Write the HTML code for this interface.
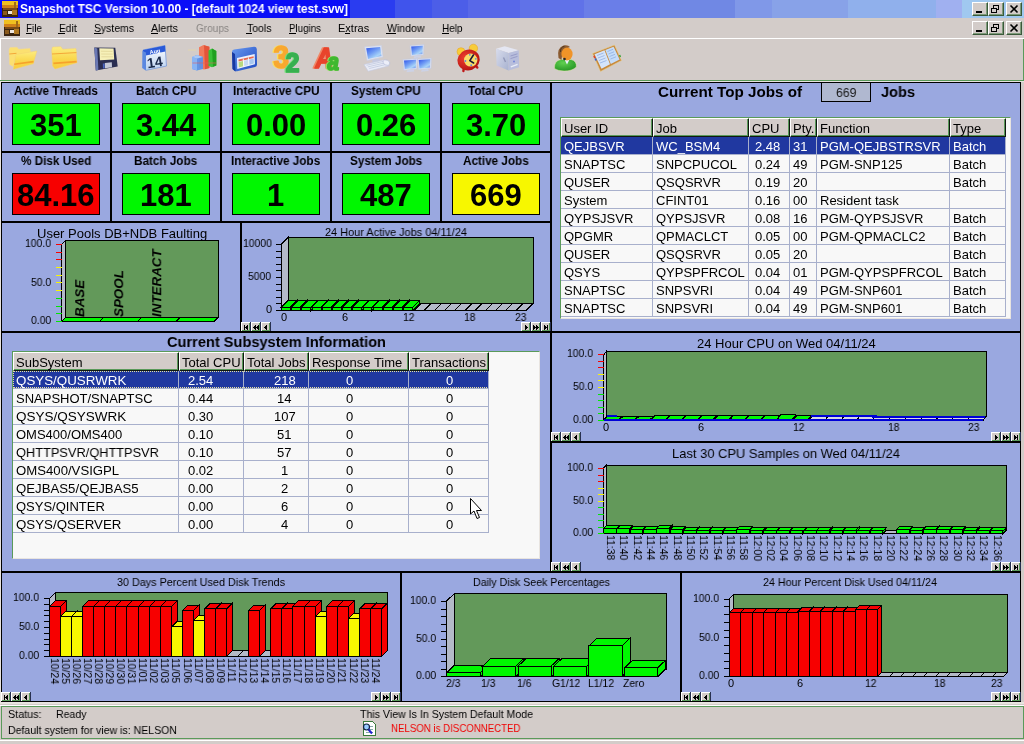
<!DOCTYPE html>
<html><head><meta charset="utf-8"><title>Snapshot TSC</title>
<style>
html,body{margin:0;padding:0;}
body{width:1024px;height:744px;overflow:hidden;background:#d3ccc9;font-family:"Liberation Sans",sans-serif;position:relative;}
.t{position:absolute;white-space:pre;transform-origin:0 0;will-change:transform;}
.b{position:absolute;box-sizing:border-box;}
svg{position:absolute;left:0;top:0;}
</style></head><body>
<div class="b" style="left:0px;top:0px;width:1024px;height:18px;background:linear-gradient(90deg,#0a0ef8 0px,#0a0ef8 350px,#2a3cf0 350px,#2a3cf0 395px,#4054ec 395px,#4054ec 432px,#4c5ee8 432px,#4c5ee8 468px,#5868e8 468px,#5868e8 520px,#6072e8 520px,#6072e8 584px,#6a7ee8 584px,#6a7ee8 660px,#7088e4 660px,#7088e4 735px,#8098e8 735px,#8098e8 772px,#88a2e8 772px,#88a2e8 848px,#90b0ec 848px,#90b0ec 936px,#a0b0f0 936px,#a0b0f0 962px,#a0c8f0 962px,#a0c8f0 1024px);"></div>
<svg width="1024" height="744"><g shape-rendering="crispEdges"><rect x="2" y="1" width="16" height="16" fill="#3a2410"/><rect x="2" y="1" width="16" height="4" fill="#f0c020"/><rect x="2" y="5" width="16" height="3" fill="#d08018"/><rect x="3" y="8" width="14" height="2" fill="#7a4a18"/><rect x="8" y="11" width="4" height="3" fill="#f0e8e0"/><rect x="12" y="10" width="5" height="5" fill="#b07820"/><rect x="3" y="11" width="4" height="4" fill="#8a5a1c"/><rect x="14" y="2" width="2" height="6" fill="#a06a18"/></g></svg>
<div class="t" style="left:20.00px;top:2.00px;font-size:12px;line-height:14px;color:#fff;font-weight:bold;transform:scaleX(0.9936);">Snapshot TSC Version 10.00 - [default 1024 view test.svw]</div>
<div class="b" style="left:0px;top:18px;width:1024px;height:20px;background:#d3ccc9;"></div>
<div class="b" style="left:972px;top:2px;width:16px;height:14px;background:#d3ccc9;border-top:1px solid #fff;border-left:1px solid #fff;border-right:1px solid #3a5a3a;border-bottom:1px solid #3a5a3a;box-shadow:inset -1px -1px 0 #7e9a7a;"></div>
<div class="b" style="left:976px;top:11px;width:6px;height:2px;background:#000"></div>
<div class="b" style="left:972px;top:21px;width:16px;height:14px;background:#d3ccc9;border-top:1px solid #fff;border-left:1px solid #fff;border-right:1px solid #3a5a3a;border-bottom:1px solid #3a5a3a;box-shadow:inset -1px -1px 0 #7e9a7a;"></div>
<div class="b" style="left:976px;top:30px;width:6px;height:2px;background:#000"></div>
<div class="b" style="left:988px;top:2px;width:16px;height:14px;background:#d3ccc9;border-top:1px solid #fff;border-left:1px solid #fff;border-right:1px solid #3a5a3a;border-bottom:1px solid #3a5a3a;box-shadow:inset -1px -1px 0 #7e9a7a;"></div>
<svg width="1024" height="744" style="pointer-events:none"><g fill="none" stroke="#000" shape-rendering="crispEdges"><rect x="993.5" y="5.5" width="5" height="4"/><line x1="993" y1="5" x2="999" y2="5"/><rect x="991.5" y="8.5" width="5" height="4" fill="#d3ccc9"/><line x1="991" y1="8" x2="997" y2="8"/></g></svg>
<div class="b" style="left:988px;top:21px;width:16px;height:14px;background:#d3ccc9;border-top:1px solid #fff;border-left:1px solid #fff;border-right:1px solid #3a5a3a;border-bottom:1px solid #3a5a3a;box-shadow:inset -1px -1px 0 #7e9a7a;"></div>
<svg width="1024" height="744" style="pointer-events:none"><g fill="none" stroke="#000" shape-rendering="crispEdges"><rect x="993.5" y="24.5" width="5" height="4"/><line x1="993" y1="24" x2="999" y2="24"/><rect x="991.5" y="27.5" width="5" height="4" fill="#d3ccc9"/><line x1="991" y1="27" x2="997" y2="27"/></g></svg>
<div class="b" style="left:1006px;top:2px;width:16px;height:14px;background:#d3ccc9;border-top:1px solid #fff;border-left:1px solid #fff;border-right:1px solid #3a5a3a;border-bottom:1px solid #3a5a3a;box-shadow:inset -1px -1px 0 #7e9a7a;"></div>
<svg width="1024" height="744"><g stroke="#000" stroke-width="1.6" fill="none"><path d="M1010.5 5.5 L1017.5 12.5 M1017.5 5.5 L1010.5 12.5"/></g></svg>
<div class="b" style="left:1006px;top:21px;width:16px;height:14px;background:#d3ccc9;border-top:1px solid #fff;border-left:1px solid #fff;border-right:1px solid #3a5a3a;border-bottom:1px solid #3a5a3a;box-shadow:inset -1px -1px 0 #7e9a7a;"></div>
<svg width="1024" height="744"><g stroke="#000" stroke-width="1.6" fill="none"><path d="M1010.5 24.5 L1017.5 31.5 M1017.5 24.5 L1010.5 31.5"/></g></svg>
<svg width="1024" height="744"><g shape-rendering="crispEdges"><rect x="4" y="20" width="16" height="16" fill="#3a2410"/><rect x="4" y="20" width="16" height="4" fill="#f0c020"/><rect x="4" y="24" width="16" height="3" fill="#d08018"/><rect x="5" y="27" width="14" height="2" fill="#7a4a18"/><rect x="10" y="30" width="4" height="3" fill="#f0e8e0"/><rect x="14" y="29" width="5" height="5" fill="#b07820"/><rect x="5" y="30" width="4" height="4" fill="#8a5a1c"/><rect x="16" y="21" width="2" height="6" fill="#a06a18"/></g></svg>
<div class="t" style="left:25.50px;top:21.60px;font-size:11px;line-height:13px;color:#000;transform:scaleX(0.9028);">File</div>
<div class="b" style="left:26px;top:33px;width:6px;height:1px;background:#000;"></div>
<div class="t" style="left:58.50px;top:21.60px;font-size:11px;line-height:13px;color:#000;transform:scaleX(0.9232);">Edit</div>
<div class="b" style="left:58px;top:33px;width:7px;height:1px;background:#000;"></div>
<div class="t" style="left:93.50px;top:21.60px;font-size:11px;line-height:13px;color:#000;transform:scaleX(0.9484);">Systems</div>
<div class="b" style="left:94px;top:33px;width:7px;height:1px;background:#000;"></div>
<div class="t" style="left:151.00px;top:21.60px;font-size:11px;line-height:13px;color:#000;transform:scaleX(0.9602);">Alerts</div>
<div class="b" style="left:151px;top:33px;width:7px;height:1px;background:#000;"></div>
<div class="t" style="left:196.00px;top:21.60px;font-size:11px;line-height:13px;color:#8a8684;transform:scaleX(0.9148);">Groups</div>
<div class="t" style="left:246.50px;top:21.60px;font-size:11px;line-height:13px;color:#000;transform:scaleX(0.9541);">Tools</div>
<div class="b" style="left:246px;top:33px;width:6px;height:1px;background:#000;"></div>
<div class="t" style="left:289.00px;top:21.60px;font-size:11px;line-height:13px;color:#000;transform:scaleX(0.8870);">Plugins</div>
<div class="b" style="left:289px;top:33px;width:7px;height:1px;background:#000;"></div>
<div class="t" style="left:338.00px;top:21.60px;font-size:11px;line-height:13px;color:#000;transform:scaleX(0.9944);">Extras</div>
<div class="b" style="left:345px;top:33px;width:5px;height:1px;background:#000;"></div>
<div class="t" style="left:386.50px;top:21.60px;font-size:11px;line-height:13px;color:#000;transform:scaleX(0.9586);">Window</div>
<div class="b" style="left:386px;top:33px;width:10px;height:1px;background:#000;"></div>
<div class="t" style="left:441.50px;top:21.60px;font-size:11px;line-height:13px;color:#000;transform:scaleX(0.9062);">Help</div>
<div class="b" style="left:442px;top:33px;width:7px;height:1px;background:#000;"></div>
<div class="b" style="left:0px;top:38px;width:1024px;height:1px;background:#fff;"></div>
<div class="b" style="left:0px;top:39px;width:1024px;height:41px;background:#d3ccc9;"></div>
<div class="b" style="left:0px;top:39px;width:1px;height:41px;background:#fff;"></div>
<div class="b" style="left:1023px;top:39px;width:1px;height:42px;background:#5a9a5a;"></div>
<div class="b" style="left:0px;top:80px;width:1024px;height:1px;background:#5a9a5a;"></div>
<div class="b" style="left:0px;top:81px;width:1024px;height:1px;background:#e8e4e0;"></div>
<div class="b" style="left:0px;top:702px;width:1024px;height:42px;background:#d3ccc9;"></div>
<div class="b" style="left:0px;top:702px;width:1024px;height:2px;background:#e8e4e0;"></div>
<div class="b" style="left:0px;top:705px;width:1024px;height:1px;background:#fff;"></div>
<div class="b" style="left:1px;top:706px;width:1023px;height:33px;border:1px solid #5a9a5a;"></div>
<div class="b" style="left:0px;top:740px;width:1024px;height:1px;background:#fff;"></div>
<div class="t" style="left:8.00px;top:708.00px;font-size:11px;line-height:13px;color:#000;transform:scaleX(0.9783);">Status:</div>
<div class="t" style="left:55.50px;top:708.00px;font-size:11px;line-height:13px;color:#000;transform:scaleX(0.9593);">Ready</div>
<div class="t" style="left:8.00px;top:724.00px;font-size:11px;line-height:13px;color:#000;transform:scaleX(0.9600);">Default system for view is: NELSON</div>
<div class="t" style="left:360.00px;top:708.00px;font-size:11px;line-height:13px;color:#000;transform:scaleX(0.9636);">This View Is In System Default Mode</div>
<div class="t" style="left:391.00px;top:721.50px;font-size:11px;line-height:13px;color:#f00000;transform:scaleX(0.8792);">NELSON is DISCONNECTED</div>
<svg width="1024" height="744"><g shape-rendering="crispEdges"><path d="M363.5 721.5 H372.5 L375.5 724.5 V735.5 H363.5 Z" fill="#fff" stroke="#3a7a3a"/><rect x="366" y="726" width="7" height="1" fill="#8aa"/><rect x="366" y="729" width="7" height="1" fill="#8aa"/><rect x="366" y="732" width="7" height="1" fill="#8aa"/></g><circle cx="366.5" cy="727" r="3" fill="#9cf" stroke="#124" stroke-width="1.2"/><path d="M368.5 729.5 L372 733.5" stroke="#22c" stroke-width="2"/></svg>
<svg width="1024" height="744"><defs>
<linearGradient id="gy" x1="0" y1="0" x2="0" y2="1"><stop offset="0" stop-color="#fdec80"/><stop offset=".6" stop-color="#f9d648"/><stop offset="1" stop-color="#f8cc40"/></linearGradient>
<linearGradient id="gy2" x1="0" y1="0" x2="0" y2="1"><stop offset="0" stop-color="#fbd85a"/><stop offset="1" stop-color="#eeb030"/></linearGradient>
<linearGradient id="gb" x1="0" y1="0" x2="1" y2="1"><stop offset="0" stop-color="#6a9af0"/><stop offset="1" stop-color="#1c48c0"/></linearGradient>
<linearGradient id="gscr" x1="0" y1="0" x2=".8" y2="1"><stop offset="0" stop-color="#3054e8"/><stop offset=".45" stop-color="#6c98f4"/><stop offset=".8" stop-color="#a8d4f8"/><stop offset="1" stop-color="#78a0f0"/></linearGradient>
<linearGradient id="gsil" x1="0" y1="0" x2="1" y2="1"><stop offset="0" stop-color="#d8dcec"/><stop offset="1" stop-color="#a8b2d0"/></linearGradient>
<linearGradient id="gcal" x1="0" y1="0" x2="0" y2="1"><stop offset="0" stop-color="#ffffff"/><stop offset="1" stop-color="#b8d0f0"/></linearGradient>
<radialGradient id="gred" cx=".4" cy=".35" r=".7"><stop offset="0" stop-color="#f04030"/><stop offset="1" stop-color="#b01010"/></radialGradient>
<radialGradient id="ggrn" cx=".4" cy=".3" r=".8"><stop offset="0" stop-color="#60d050"/><stop offset="1" stop-color="#209020"/></radialGradient>
</defs><g><path d="M9 50 L10 47.6 L17 47.2 L18.6 49.2 L30 48.6 L30.6 53 L16 55.5 L13.2 66.5 L9.6 64.5 Z" fill="#fbe070" stroke="#f4d890" stroke-width=".5"/><path d="M9.3 54 L16.5 53.3" stroke="#f4a838" stroke-width="1"/><path d="M15.7 54.5 L36.8 51 L33.3 63.8 L13.4 69.3 Z" fill="url(#gy)" stroke="#f4d070" stroke-width=".5"/><path d="M14.2 64.2 L33.6 61.6" stroke="#f6a22c" stroke-width="1.6" fill="none"/></g><g><path d="M51.7 50 L52.5 47.1 L61 46.7 L62.6 49.2 L76 48.6 L77 62.7 L55 69 L52.6 66 Z" fill="url(#gy)" stroke="#f4d070" stroke-width=".5"/><path d="M52 54 L76.4 52.6" stroke="#f4a838" stroke-width="1"/><path d="M53.4 63.3 L76.6 61.6" stroke="#f6a22c" stroke-width="1.7" fill="none"/></g><g><path d="M94.3 47.4 L115.3 47.8 L117.7 66.6 L95.8 70.5 Z" fill="#2a2e52"/><path d="M94.3 47.4 L97.3 48.4 L98.4 70 L95.8 70.5 Z" fill="#6a78b4"/><path d="M99.3 48.3 L113.6 48.6 L114.2 59.6 L100 60.3 Z" fill="#f6f0b8"/><path d="M101 51.2 L112.5 51.4 M101.2 54 L112.8 54.1 M101.4 56.8 L113 56.8" stroke="#dcd090" stroke-width=".7"/><path d="M104.8 63 L111.8 62.3 L112 67.3 L105 68.3 Z" fill="#c4c8d8"/><path d="M102.8 63.6 L104.6 63.4 L104.8 68.3 L103 68.6 Z" fill="#4a64c0"/></g><g><path d="M143 50 L165 45.5 L166.5 66 L146 70.3 L142.5 68 Z" fill="url(#gcal)" stroke="#6a90d8" stroke-width=".7"/><path d="M143 50 L165 45.5 L165.4 51.5 L143.4 56 Z" fill="#2a5ad8"/><path d="M142.5 51 L146 52.5 L146 70.3 L142.5 68 Z" fill="#5a88e0"/><text x="149.5" y="53.3" font-size="5.5" font-weight="bold" fill="#fff" font-family="Liberation Sans" transform="rotate(-11 155 51)">Aug</text><text x="147" y="67" font-size="14" font-weight="bold" fill="#182848" font-family="Liberation Sans" transform="rotate(-8 156 62)">14</text></g><g><path d="M199 47.2 L203.5 45 L209.4 46.8 L209.4 68 L204 69.5 L199 68 Z" fill="#f07a5c"/><path d="M204 45.2 L209.4 46.8 L209.4 68 L205 69.2 Z" fill="#e4543a"/><path d="M208.5 50.5 L212 48.6 L216.3 51 L216.3 65.5 L212 67.3 L208.5 66 Z" fill="#38c038"/><path d="M212 48.6 L216.3 51 L216.3 65.5 L213 66.8 Z" fill="#20a020"/><path d="M192 57 L197 55 L203 57 L203 69 L197 70.6 L192 69 Z" fill="#5a90e8" opacity=".92"/><path d="M192 57 L197 58.5 L197 70.6 L192 69 Z" fill="#88b4f4"/><path d="M192 57 L197 55 L203 57 L197 58.5Z" fill="#a8c8f8"/><path d="M192.5 63 H216" stroke="#e06060" stroke-width=".6"/><path d="M188 50 H196" stroke="#e8d8a0" stroke-width=".7"/></g><g><path d="M232 52 Q232 50 234 49.6 L254 46.8 Q256.5 46.6 256.8 49 L257 64.5 Q257 66.5 255 67 L237 71.3 Q235 71.6 234 70.5 L232.5 69 Z" fill="url(#gb)"/><path d="M232 52 L235 54 L235.5 71.4 L232.5 69 Z" fill="#1838a0"/><path d="M237 58 L254.7 54 L254.9 64.2 L237.3 69 Z" fill="#eef2fc"/><path d="M238.5 59.6 L253.6 56.2 L253.7 58 L238.6 61.5 Z" fill="#e86a50"/><path d="M243.3 58.6 L243.6 66.5 M248.5 57.4 L248.8 65.2" stroke="#fff" stroke-width=".8"/><path d="M238.6 62 L243 61 L243.2 66.2 L238.8 67.4 Z" fill="#b8d880"/><path d="M244 60.8 L248.2 59.8 L248.4 65 L244.2 66 Z" fill="#c4d8f4"/><path d="M249.2 59.6 L253.7 58.5 L253.9 63.6 L249.4 64.8 Z" fill="#a8c8f0"/></g><g style="font-family:Liberation Sans;font-weight:bold"><text x="272.20000000000005" y="68.0" font-size="31" fill="#f8e060" stroke="#f8e060" stroke-width="1.7" stroke-linejoin="round" textLength="15.5" lengthAdjust="spacingAndGlyphs">3</text><text x="273.6" y="68.0" font-size="31" fill="#f8a830" stroke="#f8a830" stroke-width="1.7" stroke-linejoin="round" textLength="15.5" lengthAdjust="spacingAndGlyphs">3</text><text x="284.40000000000003" y="71.8" font-size="27" fill="#74e078" stroke="#74e078" stroke-width="1.7" stroke-linejoin="round" textLength="13.8" lengthAdjust="spacingAndGlyphs">2</text><text x="285.8" y="71.8" font-size="27" fill="#38b050" stroke="#38b050" stroke-width="1.7" stroke-linejoin="round" textLength="13.8" lengthAdjust="spacingAndGlyphs">2</text></g><g style="font-family:Liberation Sans;font-weight:bold"><text x="313.7" y="67.6" font-size="30" fill="#f08868" stroke="#f08868" stroke-width="1.7" stroke-linejoin="round" textLength="17.5" lengthAdjust="spacingAndGlyphs" font-style="italic">A</text><text x="315.5" y="67.6" font-size="30" fill="#e8442c" stroke="#e8442c" stroke-width="1.7" stroke-linejoin="round" textLength="17.5" lengthAdjust="spacingAndGlyphs" font-style="italic">A</text><text x="326.3" y="70.3" font-size="23" fill="#98e060" stroke="#98e060" stroke-width="1.7" stroke-linejoin="round" textLength="11.5" lengthAdjust="spacingAndGlyphs" font-style="italic">a</text><text x="327.5" y="70.3" font-size="23" fill="#40b830" stroke="#40b830" stroke-width="1.7" stroke-linejoin="round" textLength="11.5" lengthAdjust="spacingAndGlyphs" font-style="italic">a</text></g><g><path d="M364.6 46.8 L381.4 45.5 L383 57 L367 60.5 Z" fill="#dfe4f2" stroke="#c8cee4" stroke-width=".6"/><path d="M366.2 48.2 L380.2 47 L381.5 56 L368 59 Z" fill="url(#gscr)"/><path d="M372 60.3 L379 58.8 L380.5 62 L373 63.6 Z" fill="#c4cae0"/><path d="M364 64.5 L383.5 60 L389 65.8 L368.2 71.3 Z" fill="#e8ebf6" stroke="#c4cae0" stroke-width=".6"/><path d="M366.5 65.3 L383.3 61.4 M367.8 66.9 L384.8 62.9 M369.2 68.5 L386.2 64.4" stroke="#bcc4dc" stroke-width=".7"/><ellipse cx="386.4" cy="62.6" rx="3.6" ry="2.5" fill="#eceef8" stroke="#b4bcd8" stroke-width=".6" transform="rotate(25 386.4 62.6)"/></g><g><path d="M410 45.5 L424 44.5 L423.5 55.0 L411 56.2 Z" fill="#d8def0" stroke="#c0c8e0" stroke-width=".5"/><path d="M411.2 46.5 L422.8 45.7 L422.4 54.0 L412 55.0 Z" fill="url(#gscr)"/><path d="M414.2 56.2 L420.5 55.5 L421.2 57.5 L413.5 58.2 Z" fill="#ccd2e6"/><path d="M417 57 V62 M417 60 L410 64 M417 60 L424 64" stroke="#c8cee4" stroke-width="1.4" fill="none"/><path d="M402.8 59.5 L417.3 58.5 L416.8 69.0 L403.8 70.2 Z" fill="#d8def0" stroke="#c0c8e0" stroke-width=".5"/><path d="M404.0 60.5 L416.1 59.7 L415.7 68.0 L404.8 69.0 Z" fill="url(#gscr)"/><path d="M407.15000000000003 70.2 L413.675 69.5 L414.40000000000003 71.5 L406.425 72.2 Z" fill="#ccd2e6"/><path d="M417.5 59 L431.5 58 L431.0 68.5 L418.5 69.7 Z" fill="#d8def0" stroke="#c0c8e0" stroke-width=".5"/><path d="M418.7 60 L430.3 59.2 L429.9 67.5 L419.5 68.5 Z" fill="url(#gscr)"/><path d="M421.7 69.7 L428.0 69.0 L428.7 71.0 L421.0 71.7 Z" fill="#ccd2e6"/></g><g><circle cx="461" cy="51.7" r="4" fill="#f8cc38" stroke="#e8a828" stroke-width=".6"/><circle cx="473.4" cy="48.4" r="4.2" fill="#f8cc38" stroke="#e8a828" stroke-width=".6"/><path d="M463.8 68 L463.4 71 M476 66 L477.3 67.6" stroke="#c01818" stroke-width="2.4" stroke-linecap="round"/><ellipse cx="468.6" cy="60" rx="11.3" ry="10.3" fill="url(#gred)" transform="rotate(-20 468.6 60)"/><ellipse cx="470.7" cy="60.1" rx="6.7" ry="6.5" fill="#f8dc68"/><g fill="#5a8ae0"><circle cx="469.8" cy="54.8" r=".9"/><circle cx="475.8" cy="58.8" r=".9"/><circle cx="471.2" cy="65.2" r=".9"/><circle cx="465.4" cy="61" r=".9"/></g><path d="M469.8 60.6 L473.4 55 M469.8 60.6 L473.6 63" stroke="#181838" stroke-width="1.6" stroke-linecap="round"/></g><g><path d="M496 48.8 L504.7 46.2 L518.8 50.2 L508.6 53 Z" fill="#e4e6f2"/><path d="M496 48.8 L508.6 53 L508.6 70.5 L496.6 65.5 Z" fill="url(#gsil)"/><path d="M508.6 53 L518.8 50.2 L519.1 67.3 L508.6 70.5 Z" fill="#b8bedc"/><path d="M510.5 56 L517.5 53.8 M510.5 58.6 L517.5 56.4" stroke="#989cc8" stroke-width="1"/><path d="M510.8 66.8 L517.6 64.4" stroke="#e8ecf8" stroke-width="1.4"/><path d="M503.5 57.5 L505.5 62" stroke="#9098b8" stroke-width="1.4"/><circle cx="514" cy="61.5" r=".9" fill="#6a80d8"/></g><g><path d="M554.5 68.5 Q554 60.5 561 59.5 L571 59.5 Q577 61 576.3 67 Q572 71.2 564 71 Q557.5 70.8 554.5 68.5 Z" fill="url(#ggrn)" stroke="#e8e8b0" stroke-width=".5"/><path d="M564.5 59.5 L567 64.5 L569.5 59.5 Z" fill="#e8f0ff"/><path d="M558.5 58 Q556.5 48 563.5 45.5 Q568 44.6 570 47 Q563.5 48.5 562 56 L561.5 60 Z" fill="#8a5a30"/><ellipse cx="567" cy="54" rx="5.6" ry="6.4" fill="#f09428"/><path d="M560.5 52 Q560 47.5 564.5 46.2" stroke="#503820" stroke-width="1" fill="none"/><circle cx="564.5" cy="59" r="1.3" fill="#282828"/></g><g><path d="M592.5 53.5 L614.5 45 L621.5 60.5 L600.5 71.5 Z" fill="#c8883a" stroke="#e8d090" stroke-width=".6"/><path d="M594.5 54.2 L604.5 50.2 L610 64.3 L601.5 68.8 Z" fill="#d4e4fa"/><path d="M605.3 49.9 L613.6 46.8 L619.6 59.4 L610.8 63.9 Z" fill="#c4dcf8"/><path d="M597 55.5 L603.5 53 M598 58 L604.5 55.5 M599 60.5 L605.5 58 M600 63 L606.5 60.5 M607.5 51.5 L613 49.3 M608.5 54 L614 51.8 M609.5 56.5 L615 54.3 M610.5 59 L616 56.8" stroke="#88a8e0" stroke-width=".7"/><rect x="593.6" y="56" width="1.6" height="2.2" fill="#e04030" transform="rotate(-22 594 57)"/><rect x="594.6" y="58.6" width="1.6" height="2.2" fill="#3060e0" transform="rotate(-22 595 59)"/><rect x="619.3" y="55" width="1.4" height="2" fill="#30a030" transform="rotate(-22 620 56)"/></g></svg>
<div class="b" style="left:0px;top:82px;width:1024px;height:620px;background:#9aa8e0;"></div>
<div class="b" style="left:0px;top:82px;width:1px;height:620px;background:#e8e4e0;"></div>
<div class="b" style="left:1021px;top:82px;width:3px;height:620px;background:#d3ccc9;"></div>
<div class="b" style="left:1px;top:82px;width:110px;height:70px;border:1px solid #000;"></div>
<div class="b" style="left:1px;top:152px;width:110px;height:70px;border:1px solid #000;"></div>
<div class="b" style="left:111px;top:82px;width:110px;height:70px;border:1px solid #000;"></div>
<div class="b" style="left:111px;top:152px;width:110px;height:70px;border:1px solid #000;"></div>
<div class="b" style="left:221px;top:82px;width:110px;height:70px;border:1px solid #000;"></div>
<div class="b" style="left:221px;top:152px;width:110px;height:70px;border:1px solid #000;"></div>
<div class="b" style="left:331px;top:82px;width:110px;height:70px;border:1px solid #000;"></div>
<div class="b" style="left:331px;top:152px;width:110px;height:70px;border:1px solid #000;"></div>
<div class="b" style="left:441px;top:82px;width:110px;height:70px;border:1px solid #000;"></div>
<div class="b" style="left:441px;top:152px;width:110px;height:70px;border:1px solid #000;"></div>
<div class="b" style="left:1px;top:222px;width:240px;height:110px;border:1px solid #000;"></div>
<div class="b" style="left:241px;top:222px;width:310px;height:110px;border:1px solid #000;"></div>
<div class="b" style="left:1px;top:332px;width:550px;height:240px;border:1px solid #000;"></div>
<div class="b" style="left:551px;top:82px;width:470px;height:250px;border:1px solid #000;"></div>
<div class="b" style="left:551px;top:332px;width:470px;height:110px;border:1px solid #000;"></div>
<div class="b" style="left:551px;top:442px;width:470px;height:130px;border:1px solid #000;"></div>
<div class="b" style="left:1px;top:572px;width:400px;height:130px;border:1px solid #000;"></div>
<div class="b" style="left:401px;top:572px;width:280px;height:130px;border:1px solid #000;"></div>
<div class="b" style="left:681px;top:572px;width:340px;height:130px;border:1px solid #000;"></div>
<div class="t" style="left:14.02px;top:84.00px;font-size:12px;line-height:14px;color:#000;font-weight:bold;transform:scaleX(0.9760);">Active Threads</div>
<div class="b" style="left:12px;top:103px;width:88px;height:42px;background:#00f700;border:1px solid #000;"></div>
<div class="t" style="left:30.14px;top:109.00px;font-size:31px;line-height:33px;color:#000;font-weight:bold;">351</div>
<div class="t" style="left:135.74px;top:84.00px;font-size:12px;line-height:14px;color:#000;font-weight:bold;transform:scaleX(0.9760);">Batch CPU</div>
<div class="b" style="left:122px;top:103px;width:88px;height:42px;background:#00f700;border:1px solid #000;"></div>
<div class="t" style="left:135.83px;top:109.00px;font-size:31px;line-height:33px;color:#000;font-weight:bold;">3.44</div>
<div class="t" style="left:232.71px;top:84.00px;font-size:12px;line-height:14px;color:#000;font-weight:bold;transform:scaleX(0.9760);">Interactive CPU</div>
<div class="b" style="left:232px;top:103px;width:88px;height:42px;background:#00f700;border:1px solid #000;"></div>
<div class="t" style="left:245.83px;top:109.00px;font-size:31px;line-height:33px;color:#000;font-weight:bold;">0.00</div>
<div class="t" style="left:351.18px;top:84.00px;font-size:12px;line-height:14px;color:#000;font-weight:bold;transform:scaleX(0.9760);">System CPU</div>
<div class="b" style="left:342px;top:103px;width:88px;height:42px;background:#00f700;border:1px solid #000;"></div>
<div class="t" style="left:355.83px;top:109.00px;font-size:31px;line-height:33px;color:#000;font-weight:bold;">0.26</div>
<div class="t" style="left:468.46px;top:84.00px;font-size:12px;line-height:14px;color:#000;font-weight:bold;transform:scaleX(0.9760);">Total CPU</div>
<div class="b" style="left:452px;top:103px;width:88px;height:42px;background:#00f700;border:1px solid #000;"></div>
<div class="t" style="left:465.83px;top:109.00px;font-size:31px;line-height:33px;color:#000;font-weight:bold;">3.70</div>
<div class="t" style="left:20.85px;top:154.00px;font-size:12px;line-height:14px;color:#000;font-weight:bold;transform:scaleX(0.9760);">% Disk Used</div>
<div class="b" style="left:12px;top:173px;width:88px;height:42px;background:#f70000;border:1px solid #000;"></div>
<div class="t" style="left:17.21px;top:179.00px;font-size:31px;line-height:33px;color:#000;font-weight:bold;">84.16</div>
<div class="t" style="left:134.44px;top:154.00px;font-size:12px;line-height:14px;color:#000;font-weight:bold;transform:scaleX(0.9760);">Batch Jobs</div>
<div class="b" style="left:122px;top:173px;width:88px;height:42px;background:#00f700;border:1px solid #000;"></div>
<div class="t" style="left:140.14px;top:179.00px;font-size:31px;line-height:33px;color:#000;font-weight:bold;">181</div>
<div class="t" style="left:231.41px;top:154.00px;font-size:12px;line-height:14px;color:#000;font-weight:bold;transform:scaleX(0.9760);">Interactive Jobs</div>
<div class="b" style="left:232px;top:173px;width:88px;height:42px;background:#00f700;border:1px solid #000;"></div>
<div class="t" style="left:267.38px;top:179.00px;font-size:31px;line-height:33px;color:#000;font-weight:bold;">1</div>
<div class="t" style="left:349.87px;top:154.00px;font-size:12px;line-height:14px;color:#000;font-weight:bold;transform:scaleX(0.9760);">System Jobs</div>
<div class="b" style="left:342px;top:173px;width:88px;height:42px;background:#00f700;border:1px solid #000;"></div>
<div class="t" style="left:360.14px;top:179.00px;font-size:31px;line-height:33px;color:#000;font-weight:bold;">487</div>
<div class="t" style="left:463.13px;top:154.00px;font-size:12px;line-height:14px;color:#000;font-weight:bold;transform:scaleX(0.9760);">Active Jobs</div>
<div class="b" style="left:452px;top:173px;width:88px;height:42px;background:#f7f700;border:1px solid #000;"></div>
<div class="t" style="left:470.14px;top:179.00px;font-size:31px;line-height:33px;color:#000;font-weight:bold;">669</div>
<div class="t" style="left:658.00px;top:83.00px;font-size:15px;line-height:17px;color:#000;font-weight:bold;transform:scaleX(1.0126);">Current Top Jobs of</div>
<div class="t" style="left:881.00px;top:83.00px;font-size:15px;line-height:17px;color:#000;font-weight:bold;transform:scaleX(0.9712);">Jobs</div>
<div class="b" style="left:821px;top:82px;width:50px;height:20px;background:#b0b8d0;border:1px solid #000;"></div>
<div class="t" style="left:835.81px;top:84.50px;font-size:13px;line-height:15px;color:#181818;transform:scaleX(0.9400);">669</div>
<div class="b" style="left:560px;top:117px;width:451px;height:202px;background:#f8f8f8;border:1px solid #5a9a5a;border-right-color:#e8e4e0;border-bottom-color:#e8e4e0;"></div>
<div class="b" style="left:561px;top:118px;width:92px;height:19px;background:#d3ccc9;border-top:1px solid #fff;border-left:1px solid #fff;border-right:1px solid #101810;border-bottom:1px solid #101810;box-shadow:inset -1px -1px 0 #5a9a5a;"></div>
<div class="t" style="left:564.00px;top:120.80px;font-size:13px;line-height:15px;color:#000;">User ID</div>
<div class="b" style="left:653px;top:118px;width:96px;height:19px;background:#d3ccc9;border-top:1px solid #fff;border-left:1px solid #fff;border-right:1px solid #101810;border-bottom:1px solid #101810;box-shadow:inset -1px -1px 0 #5a9a5a;"></div>
<div class="t" style="left:656.00px;top:120.80px;font-size:13px;line-height:15px;color:#000;">Job</div>
<div class="b" style="left:749px;top:118px;width:41px;height:19px;background:#d3ccc9;border-top:1px solid #fff;border-left:1px solid #fff;border-right:1px solid #101810;border-bottom:1px solid #101810;box-shadow:inset -1px -1px 0 #5a9a5a;"></div>
<div class="t" style="left:752.00px;top:120.80px;font-size:13px;line-height:15px;color:#000;">CPU</div>
<div class="b" style="left:790px;top:118px;width:27px;height:19px;background:#d3ccc9;border-top:1px solid #fff;border-left:1px solid #fff;border-right:1px solid #101810;border-bottom:1px solid #101810;box-shadow:inset -1px -1px 0 #5a9a5a;"></div>
<div class="t" style="left:793.00px;top:120.80px;font-size:13px;line-height:15px;color:#000;">Pty.</div>
<div class="b" style="left:817px;top:118px;width:133px;height:19px;background:#d3ccc9;border-top:1px solid #fff;border-left:1px solid #fff;border-right:1px solid #101810;border-bottom:1px solid #101810;box-shadow:inset -1px -1px 0 #5a9a5a;"></div>
<div class="t" style="left:820.00px;top:120.80px;font-size:13px;line-height:15px;color:#000;">Function</div>
<div class="b" style="left:950px;top:118px;width:56px;height:19px;background:#d3ccc9;border-top:1px solid #fff;border-left:1px solid #fff;border-right:1px solid #101810;border-bottom:1px solid #101810;box-shadow:inset -1px -1px 0 #5a9a5a;"></div>
<div class="t" style="left:953.00px;top:120.80px;font-size:13px;line-height:15px;color:#000;">Type</div>
<div class="b" style="left:561px;top:137px;width:445px;height:17px;background:#2038a0;"></div>
<div class="t" style="left:564.00px;top:138.70px;font-size:13px;line-height:15px;color:#fff;">QEJBSVR</div>
<div class="b" style="left:652px;top:137px;width:1px;height:18px;background:#a8b0cc;"></div>
<div class="t" style="left:656.00px;top:138.70px;font-size:13px;line-height:15px;color:#fff;">WC_BSM4</div>
<div class="b" style="left:748px;top:137px;width:1px;height:18px;background:#a8b0cc;"></div>
<div class="t" style="left:754.85px;top:138.50px;font-size:13px;line-height:15px;color:#fff;">2.48</div>
<div class="b" style="left:789px;top:137px;width:1px;height:18px;background:#a8b0cc;"></div>
<div class="t" style="left:793.00px;top:138.70px;font-size:13px;line-height:15px;color:#fff;">31</div>
<div class="b" style="left:816px;top:137px;width:1px;height:18px;background:#a8b0cc;"></div>
<div class="t" style="left:820.00px;top:138.70px;font-size:13px;line-height:15px;color:#fff;">PGM-QEJBSTRSVR</div>
<div class="b" style="left:949px;top:137px;width:1px;height:18px;background:#a8b0cc;"></div>
<div class="t" style="left:953.00px;top:138.70px;font-size:13px;line-height:15px;color:#fff;">Batch</div>
<div class="b" style="left:1005px;top:137px;width:1px;height:18px;background:#a8b0cc;"></div>
<div class="b" style="left:561px;top:154px;width:445px;height:1px;background:#a8b0cc;"></div>
<div class="t" style="left:564.00px;top:156.70px;font-size:13px;line-height:15px;color:#000;">SNAPTSC</div>
<div class="b" style="left:652px;top:155px;width:1px;height:18px;background:#a8b0cc;"></div>
<div class="t" style="left:656.00px;top:156.70px;font-size:13px;line-height:15px;color:#000;">SNPCPUCOL</div>
<div class="b" style="left:748px;top:155px;width:1px;height:18px;background:#a8b0cc;"></div>
<div class="t" style="left:754.85px;top:156.50px;font-size:13px;line-height:15px;color:#000;">0.24</div>
<div class="b" style="left:789px;top:155px;width:1px;height:18px;background:#a8b0cc;"></div>
<div class="t" style="left:793.00px;top:156.70px;font-size:13px;line-height:15px;color:#000;">49</div>
<div class="b" style="left:816px;top:155px;width:1px;height:18px;background:#a8b0cc;"></div>
<div class="t" style="left:820.00px;top:156.70px;font-size:13px;line-height:15px;color:#000;">PGM-SNP125</div>
<div class="b" style="left:949px;top:155px;width:1px;height:18px;background:#a8b0cc;"></div>
<div class="t" style="left:953.00px;top:156.70px;font-size:13px;line-height:15px;color:#000;">Batch</div>
<div class="b" style="left:1005px;top:155px;width:1px;height:18px;background:#a8b0cc;"></div>
<div class="b" style="left:561px;top:172px;width:445px;height:1px;background:#a8b0cc;"></div>
<div class="t" style="left:564.00px;top:174.70px;font-size:13px;line-height:15px;color:#000;">QUSER</div>
<div class="b" style="left:652px;top:173px;width:1px;height:18px;background:#a8b0cc;"></div>
<div class="t" style="left:656.00px;top:174.70px;font-size:13px;line-height:15px;color:#000;">QSQSRVR</div>
<div class="b" style="left:748px;top:173px;width:1px;height:18px;background:#a8b0cc;"></div>
<div class="t" style="left:754.85px;top:174.50px;font-size:13px;line-height:15px;color:#000;">0.19</div>
<div class="b" style="left:789px;top:173px;width:1px;height:18px;background:#a8b0cc;"></div>
<div class="t" style="left:793.00px;top:174.70px;font-size:13px;line-height:15px;color:#000;">20</div>
<div class="b" style="left:816px;top:173px;width:1px;height:18px;background:#a8b0cc;"></div>
<div class="b" style="left:949px;top:173px;width:1px;height:18px;background:#a8b0cc;"></div>
<div class="t" style="left:953.00px;top:174.70px;font-size:13px;line-height:15px;color:#000;">Batch</div>
<div class="b" style="left:1005px;top:173px;width:1px;height:18px;background:#a8b0cc;"></div>
<div class="b" style="left:561px;top:190px;width:445px;height:1px;background:#a8b0cc;"></div>
<div class="t" style="left:564.00px;top:192.70px;font-size:13px;line-height:15px;color:#000;">System</div>
<div class="b" style="left:652px;top:191px;width:1px;height:18px;background:#a8b0cc;"></div>
<div class="t" style="left:656.00px;top:192.70px;font-size:13px;line-height:15px;color:#000;">CFINT01</div>
<div class="b" style="left:748px;top:191px;width:1px;height:18px;background:#a8b0cc;"></div>
<div class="t" style="left:754.85px;top:192.50px;font-size:13px;line-height:15px;color:#000;">0.16</div>
<div class="b" style="left:789px;top:191px;width:1px;height:18px;background:#a8b0cc;"></div>
<div class="t" style="left:793.00px;top:192.70px;font-size:13px;line-height:15px;color:#000;">00</div>
<div class="b" style="left:816px;top:191px;width:1px;height:18px;background:#a8b0cc;"></div>
<div class="t" style="left:820.00px;top:192.70px;font-size:13px;line-height:15px;color:#000;">Resident task</div>
<div class="b" style="left:949px;top:191px;width:1px;height:18px;background:#a8b0cc;"></div>
<div class="b" style="left:1005px;top:191px;width:1px;height:18px;background:#a8b0cc;"></div>
<div class="b" style="left:561px;top:208px;width:445px;height:1px;background:#a8b0cc;"></div>
<div class="t" style="left:564.00px;top:210.70px;font-size:13px;line-height:15px;color:#000;">QYPSJSVR</div>
<div class="b" style="left:652px;top:209px;width:1px;height:18px;background:#a8b0cc;"></div>
<div class="t" style="left:656.00px;top:210.70px;font-size:13px;line-height:15px;color:#000;">QYPSJSVR</div>
<div class="b" style="left:748px;top:209px;width:1px;height:18px;background:#a8b0cc;"></div>
<div class="t" style="left:754.85px;top:210.50px;font-size:13px;line-height:15px;color:#000;">0.08</div>
<div class="b" style="left:789px;top:209px;width:1px;height:18px;background:#a8b0cc;"></div>
<div class="t" style="left:793.00px;top:210.70px;font-size:13px;line-height:15px;color:#000;">16</div>
<div class="b" style="left:816px;top:209px;width:1px;height:18px;background:#a8b0cc;"></div>
<div class="t" style="left:820.00px;top:210.70px;font-size:13px;line-height:15px;color:#000;">PGM-QYPSJSVR</div>
<div class="b" style="left:949px;top:209px;width:1px;height:18px;background:#a8b0cc;"></div>
<div class="t" style="left:953.00px;top:210.70px;font-size:13px;line-height:15px;color:#000;">Batch</div>
<div class="b" style="left:1005px;top:209px;width:1px;height:18px;background:#a8b0cc;"></div>
<div class="b" style="left:561px;top:226px;width:445px;height:1px;background:#a8b0cc;"></div>
<div class="t" style="left:564.00px;top:228.70px;font-size:13px;line-height:15px;color:#000;">QPGMR</div>
<div class="b" style="left:652px;top:227px;width:1px;height:18px;background:#a8b0cc;"></div>
<div class="t" style="left:656.00px;top:228.70px;font-size:13px;line-height:15px;color:#000;">QPMACLCT</div>
<div class="b" style="left:748px;top:227px;width:1px;height:18px;background:#a8b0cc;"></div>
<div class="t" style="left:754.85px;top:228.50px;font-size:13px;line-height:15px;color:#000;">0.05</div>
<div class="b" style="left:789px;top:227px;width:1px;height:18px;background:#a8b0cc;"></div>
<div class="t" style="left:793.00px;top:228.70px;font-size:13px;line-height:15px;color:#000;">00</div>
<div class="b" style="left:816px;top:227px;width:1px;height:18px;background:#a8b0cc;"></div>
<div class="t" style="left:820.00px;top:228.70px;font-size:13px;line-height:15px;color:#000;">PGM-QPMACLC2</div>
<div class="b" style="left:949px;top:227px;width:1px;height:18px;background:#a8b0cc;"></div>
<div class="t" style="left:953.00px;top:228.70px;font-size:13px;line-height:15px;color:#000;">Batch</div>
<div class="b" style="left:1005px;top:227px;width:1px;height:18px;background:#a8b0cc;"></div>
<div class="b" style="left:561px;top:244px;width:445px;height:1px;background:#a8b0cc;"></div>
<div class="t" style="left:564.00px;top:246.70px;font-size:13px;line-height:15px;color:#000;">QUSER</div>
<div class="b" style="left:652px;top:245px;width:1px;height:18px;background:#a8b0cc;"></div>
<div class="t" style="left:656.00px;top:246.70px;font-size:13px;line-height:15px;color:#000;">QSQSRVR</div>
<div class="b" style="left:748px;top:245px;width:1px;height:18px;background:#a8b0cc;"></div>
<div class="t" style="left:754.85px;top:246.50px;font-size:13px;line-height:15px;color:#000;">0.05</div>
<div class="b" style="left:789px;top:245px;width:1px;height:18px;background:#a8b0cc;"></div>
<div class="t" style="left:793.00px;top:246.70px;font-size:13px;line-height:15px;color:#000;">20</div>
<div class="b" style="left:816px;top:245px;width:1px;height:18px;background:#a8b0cc;"></div>
<div class="b" style="left:949px;top:245px;width:1px;height:18px;background:#a8b0cc;"></div>
<div class="t" style="left:953.00px;top:246.70px;font-size:13px;line-height:15px;color:#000;">Batch</div>
<div class="b" style="left:1005px;top:245px;width:1px;height:18px;background:#a8b0cc;"></div>
<div class="b" style="left:561px;top:262px;width:445px;height:1px;background:#a8b0cc;"></div>
<div class="t" style="left:564.00px;top:264.70px;font-size:13px;line-height:15px;color:#000;">QSYS</div>
<div class="b" style="left:652px;top:263px;width:1px;height:18px;background:#a8b0cc;"></div>
<div class="t" style="left:656.00px;top:264.70px;font-size:13px;line-height:15px;color:#000;">QYPSPFRCOL</div>
<div class="b" style="left:748px;top:263px;width:1px;height:18px;background:#a8b0cc;"></div>
<div class="t" style="left:754.85px;top:264.50px;font-size:13px;line-height:15px;color:#000;">0.04</div>
<div class="b" style="left:789px;top:263px;width:1px;height:18px;background:#a8b0cc;"></div>
<div class="t" style="left:793.00px;top:264.70px;font-size:13px;line-height:15px;color:#000;">01</div>
<div class="b" style="left:816px;top:263px;width:1px;height:18px;background:#a8b0cc;"></div>
<div class="t" style="left:820.00px;top:264.70px;font-size:13px;line-height:15px;color:#000;">PGM-QYPSPFRCOL</div>
<div class="b" style="left:949px;top:263px;width:1px;height:18px;background:#a8b0cc;"></div>
<div class="t" style="left:953.00px;top:264.70px;font-size:13px;line-height:15px;color:#000;">Batch</div>
<div class="b" style="left:1005px;top:263px;width:1px;height:18px;background:#a8b0cc;"></div>
<div class="b" style="left:561px;top:280px;width:445px;height:1px;background:#a8b0cc;"></div>
<div class="t" style="left:564.00px;top:282.70px;font-size:13px;line-height:15px;color:#000;">SNAPTSC</div>
<div class="b" style="left:652px;top:281px;width:1px;height:18px;background:#a8b0cc;"></div>
<div class="t" style="left:656.00px;top:282.70px;font-size:13px;line-height:15px;color:#000;">SNPSVRI</div>
<div class="b" style="left:748px;top:281px;width:1px;height:18px;background:#a8b0cc;"></div>
<div class="t" style="left:754.85px;top:282.50px;font-size:13px;line-height:15px;color:#000;">0.04</div>
<div class="b" style="left:789px;top:281px;width:1px;height:18px;background:#a8b0cc;"></div>
<div class="t" style="left:793.00px;top:282.70px;font-size:13px;line-height:15px;color:#000;">49</div>
<div class="b" style="left:816px;top:281px;width:1px;height:18px;background:#a8b0cc;"></div>
<div class="t" style="left:820.00px;top:282.70px;font-size:13px;line-height:15px;color:#000;">PGM-SNP601</div>
<div class="b" style="left:949px;top:281px;width:1px;height:18px;background:#a8b0cc;"></div>
<div class="t" style="left:953.00px;top:282.70px;font-size:13px;line-height:15px;color:#000;">Batch</div>
<div class="b" style="left:1005px;top:281px;width:1px;height:18px;background:#a8b0cc;"></div>
<div class="b" style="left:561px;top:298px;width:445px;height:1px;background:#a8b0cc;"></div>
<div class="t" style="left:564.00px;top:300.70px;font-size:13px;line-height:15px;color:#000;">SNAPTSC</div>
<div class="b" style="left:652px;top:299px;width:1px;height:18px;background:#a8b0cc;"></div>
<div class="t" style="left:656.00px;top:300.70px;font-size:13px;line-height:15px;color:#000;">SNPSVRI</div>
<div class="b" style="left:748px;top:299px;width:1px;height:18px;background:#a8b0cc;"></div>
<div class="t" style="left:754.85px;top:300.50px;font-size:13px;line-height:15px;color:#000;">0.04</div>
<div class="b" style="left:789px;top:299px;width:1px;height:18px;background:#a8b0cc;"></div>
<div class="t" style="left:793.00px;top:300.70px;font-size:13px;line-height:15px;color:#000;">49</div>
<div class="b" style="left:816px;top:299px;width:1px;height:18px;background:#a8b0cc;"></div>
<div class="t" style="left:820.00px;top:300.70px;font-size:13px;line-height:15px;color:#000;">PGM-SNP601</div>
<div class="b" style="left:949px;top:299px;width:1px;height:18px;background:#a8b0cc;"></div>
<div class="t" style="left:953.00px;top:300.70px;font-size:13px;line-height:15px;color:#000;">Batch</div>
<div class="b" style="left:1005px;top:299px;width:1px;height:18px;background:#a8b0cc;"></div>
<div class="b" style="left:561px;top:316px;width:445px;height:1px;background:#a8b0cc;"></div>
<div class="t" style="left:166.50px;top:333.00px;font-size:15px;line-height:17px;color:#000;font-weight:bold;transform:scaleX(0.9732);">Current Subsystem Information</div>
<div class="b" style="left:12px;top:351px;width:528px;height:208px;background:#f8f8f8;border:1px solid #5a9a5a;border-right-color:#e8e4e0;border-bottom-color:#e8e4e0;"></div>
<div class="b" style="left:13px;top:352px;width:166px;height:19px;background:#d3ccc9;border-top:1px solid #fff;border-left:1px solid #fff;border-right:1px solid #101810;border-bottom:1px solid #101810;box-shadow:inset -1px -1px 0 #5a9a5a;"></div>
<div class="t" style="left:16.00px;top:354.80px;font-size:13px;line-height:15px;color:#000;">SubSystem</div>
<div class="b" style="left:179px;top:352px;width:65px;height:19px;background:#d3ccc9;border-top:1px solid #fff;border-left:1px solid #fff;border-right:1px solid #101810;border-bottom:1px solid #101810;box-shadow:inset -1px -1px 0 #5a9a5a;"></div>
<div class="t" style="left:182.00px;top:354.80px;font-size:13px;line-height:15px;color:#000;">Total CPU</div>
<div class="b" style="left:244px;top:352px;width:65px;height:19px;background:#d3ccc9;border-top:1px solid #fff;border-left:1px solid #fff;border-right:1px solid #101810;border-bottom:1px solid #101810;box-shadow:inset -1px -1px 0 #5a9a5a;"></div>
<div class="t" style="left:247.00px;top:354.80px;font-size:13px;line-height:15px;color:#000;">Total Jobs</div>
<div class="b" style="left:309px;top:352px;width:100px;height:19px;background:#d3ccc9;border-top:1px solid #fff;border-left:1px solid #fff;border-right:1px solid #101810;border-bottom:1px solid #101810;box-shadow:inset -1px -1px 0 #5a9a5a;"></div>
<div class="t" style="left:312.00px;top:354.80px;font-size:13px;line-height:15px;color:#000;">Response Time</div>
<div class="b" style="left:409px;top:352px;width:80px;height:19px;background:#d3ccc9;border-top:1px solid #fff;border-left:1px solid #fff;border-right:1px solid #101810;border-bottom:1px solid #101810;box-shadow:inset -1px -1px 0 #5a9a5a;"></div>
<div class="t" style="left:412.00px;top:354.80px;font-size:13px;line-height:15px;color:#000;">Transactions</div>
<div class="b" style="left:13px;top:371px;width:476px;height:17px;background:#2038a0;outline:1px dotted #e8e0a0;outline-offset:-1px;"></div>
<div class="t" style="left:16.00px;top:372.70px;font-size:13px;line-height:15px;color:#fff;transform:scaleX(1.0271);">QSYS/QUSRWRK</div>
<div class="b" style="left:178px;top:371px;width:1px;height:18px;background:#a8b0cc;"></div>
<div class="t" style="left:188.35px;top:372.50px;font-size:13px;line-height:15px;color:#fff;">2.54</div>
<div class="b" style="left:243px;top:371px;width:1px;height:18px;background:#a8b0cc;"></div>
<div class="t" style="left:273.65px;top:372.50px;font-size:13px;line-height:15px;color:#fff;">218</div>
<div class="b" style="left:308px;top:371px;width:1px;height:18px;background:#a8b0cc;"></div>
<div class="t" style="left:345.88px;top:372.50px;font-size:13px;line-height:15px;color:#fff;">0</div>
<div class="b" style="left:408px;top:371px;width:1px;height:18px;background:#a8b0cc;"></div>
<div class="t" style="left:445.88px;top:372.50px;font-size:13px;line-height:15px;color:#fff;">0</div>
<div class="b" style="left:488px;top:371px;width:1px;height:18px;background:#a8b0cc;"></div>
<div class="b" style="left:13px;top:388px;width:476px;height:1px;background:#a8b0cc;"></div>
<div class="t" style="left:16.00px;top:390.70px;font-size:13px;line-height:15px;color:#000;">SNAPSHOT/SNAPTSC</div>
<div class="b" style="left:178px;top:389px;width:1px;height:18px;background:#a8b0cc;"></div>
<div class="t" style="left:188.35px;top:390.50px;font-size:13px;line-height:15px;color:#000;">0.44</div>
<div class="b" style="left:243px;top:389px;width:1px;height:18px;background:#a8b0cc;"></div>
<div class="t" style="left:277.27px;top:390.50px;font-size:13px;line-height:15px;color:#000;">14</div>
<div class="b" style="left:308px;top:389px;width:1px;height:18px;background:#a8b0cc;"></div>
<div class="t" style="left:345.88px;top:390.50px;font-size:13px;line-height:15px;color:#000;">0</div>
<div class="b" style="left:408px;top:389px;width:1px;height:18px;background:#a8b0cc;"></div>
<div class="t" style="left:445.88px;top:390.50px;font-size:13px;line-height:15px;color:#000;">0</div>
<div class="b" style="left:488px;top:389px;width:1px;height:18px;background:#a8b0cc;"></div>
<div class="b" style="left:13px;top:406px;width:476px;height:1px;background:#a8b0cc;"></div>
<div class="t" style="left:16.00px;top:408.70px;font-size:13px;line-height:15px;color:#000;transform:scaleX(1.0387);">QSYS/QSYSWRK</div>
<div class="b" style="left:178px;top:407px;width:1px;height:18px;background:#a8b0cc;"></div>
<div class="t" style="left:188.35px;top:408.50px;font-size:13px;line-height:15px;color:#000;">0.30</div>
<div class="b" style="left:243px;top:407px;width:1px;height:18px;background:#a8b0cc;"></div>
<div class="t" style="left:273.65px;top:408.50px;font-size:13px;line-height:15px;color:#000;">107</div>
<div class="b" style="left:308px;top:407px;width:1px;height:18px;background:#a8b0cc;"></div>
<div class="t" style="left:345.88px;top:408.50px;font-size:13px;line-height:15px;color:#000;">0</div>
<div class="b" style="left:408px;top:407px;width:1px;height:18px;background:#a8b0cc;"></div>
<div class="t" style="left:445.88px;top:408.50px;font-size:13px;line-height:15px;color:#000;">0</div>
<div class="b" style="left:488px;top:407px;width:1px;height:18px;background:#a8b0cc;"></div>
<div class="b" style="left:13px;top:424px;width:476px;height:1px;background:#a8b0cc;"></div>
<div class="t" style="left:16.00px;top:426.70px;font-size:13px;line-height:15px;color:#000;">OMS400/OMS400</div>
<div class="b" style="left:178px;top:425px;width:1px;height:18px;background:#a8b0cc;"></div>
<div class="t" style="left:188.35px;top:426.50px;font-size:13px;line-height:15px;color:#000;">0.10</div>
<div class="b" style="left:243px;top:425px;width:1px;height:18px;background:#a8b0cc;"></div>
<div class="t" style="left:277.27px;top:426.50px;font-size:13px;line-height:15px;color:#000;">51</div>
<div class="b" style="left:308px;top:425px;width:1px;height:18px;background:#a8b0cc;"></div>
<div class="t" style="left:345.88px;top:426.50px;font-size:13px;line-height:15px;color:#000;">0</div>
<div class="b" style="left:408px;top:425px;width:1px;height:18px;background:#a8b0cc;"></div>
<div class="t" style="left:445.88px;top:426.50px;font-size:13px;line-height:15px;color:#000;">0</div>
<div class="b" style="left:488px;top:425px;width:1px;height:18px;background:#a8b0cc;"></div>
<div class="b" style="left:13px;top:442px;width:476px;height:1px;background:#a8b0cc;"></div>
<div class="t" style="left:16.00px;top:444.70px;font-size:13px;line-height:15px;color:#000;transform:scaleX(0.9843);">QHTTPSVR/QHTTPSVR</div>
<div class="b" style="left:178px;top:443px;width:1px;height:18px;background:#a8b0cc;"></div>
<div class="t" style="left:188.35px;top:444.50px;font-size:13px;line-height:15px;color:#000;">0.10</div>
<div class="b" style="left:243px;top:443px;width:1px;height:18px;background:#a8b0cc;"></div>
<div class="t" style="left:277.27px;top:444.50px;font-size:13px;line-height:15px;color:#000;">57</div>
<div class="b" style="left:308px;top:443px;width:1px;height:18px;background:#a8b0cc;"></div>
<div class="t" style="left:345.88px;top:444.50px;font-size:13px;line-height:15px;color:#000;">0</div>
<div class="b" style="left:408px;top:443px;width:1px;height:18px;background:#a8b0cc;"></div>
<div class="t" style="left:445.88px;top:444.50px;font-size:13px;line-height:15px;color:#000;">0</div>
<div class="b" style="left:488px;top:443px;width:1px;height:18px;background:#a8b0cc;"></div>
<div class="b" style="left:13px;top:460px;width:476px;height:1px;background:#a8b0cc;"></div>
<div class="t" style="left:16.00px;top:462.70px;font-size:13px;line-height:15px;color:#000;transform:scaleX(1.0129);">OMS400/VSIGPL</div>
<div class="b" style="left:178px;top:461px;width:1px;height:18px;background:#a8b0cc;"></div>
<div class="t" style="left:188.35px;top:462.50px;font-size:13px;line-height:15px;color:#000;">0.02</div>
<div class="b" style="left:243px;top:461px;width:1px;height:18px;background:#a8b0cc;"></div>
<div class="t" style="left:280.88px;top:462.50px;font-size:13px;line-height:15px;color:#000;">1</div>
<div class="b" style="left:308px;top:461px;width:1px;height:18px;background:#a8b0cc;"></div>
<div class="t" style="left:345.88px;top:462.50px;font-size:13px;line-height:15px;color:#000;">0</div>
<div class="b" style="left:408px;top:461px;width:1px;height:18px;background:#a8b0cc;"></div>
<div class="t" style="left:445.88px;top:462.50px;font-size:13px;line-height:15px;color:#000;">0</div>
<div class="b" style="left:488px;top:461px;width:1px;height:18px;background:#a8b0cc;"></div>
<div class="b" style="left:13px;top:478px;width:476px;height:1px;background:#a8b0cc;"></div>
<div class="t" style="left:16.00px;top:480.70px;font-size:13px;line-height:15px;color:#000;transform:scaleX(1.0160);">QEJBAS5/QEJBAS5</div>
<div class="b" style="left:178px;top:479px;width:1px;height:18px;background:#a8b0cc;"></div>
<div class="t" style="left:188.35px;top:480.50px;font-size:13px;line-height:15px;color:#000;">0.00</div>
<div class="b" style="left:243px;top:479px;width:1px;height:18px;background:#a8b0cc;"></div>
<div class="t" style="left:280.88px;top:480.50px;font-size:13px;line-height:15px;color:#000;">2</div>
<div class="b" style="left:308px;top:479px;width:1px;height:18px;background:#a8b0cc;"></div>
<div class="t" style="left:345.88px;top:480.50px;font-size:13px;line-height:15px;color:#000;">0</div>
<div class="b" style="left:408px;top:479px;width:1px;height:18px;background:#a8b0cc;"></div>
<div class="t" style="left:445.88px;top:480.50px;font-size:13px;line-height:15px;color:#000;">0</div>
<div class="b" style="left:488px;top:479px;width:1px;height:18px;background:#a8b0cc;"></div>
<div class="b" style="left:13px;top:496px;width:476px;height:1px;background:#a8b0cc;"></div>
<div class="t" style="left:16.00px;top:498.70px;font-size:13px;line-height:15px;color:#000;transform:scaleX(0.9960);">QSYS/QINTER</div>
<div class="b" style="left:178px;top:497px;width:1px;height:18px;background:#a8b0cc;"></div>
<div class="t" style="left:188.35px;top:498.50px;font-size:13px;line-height:15px;color:#000;">0.00</div>
<div class="b" style="left:243px;top:497px;width:1px;height:18px;background:#a8b0cc;"></div>
<div class="t" style="left:280.88px;top:498.50px;font-size:13px;line-height:15px;color:#000;">6</div>
<div class="b" style="left:308px;top:497px;width:1px;height:18px;background:#a8b0cc;"></div>
<div class="t" style="left:345.88px;top:498.50px;font-size:13px;line-height:15px;color:#000;">0</div>
<div class="b" style="left:408px;top:497px;width:1px;height:18px;background:#a8b0cc;"></div>
<div class="t" style="left:445.88px;top:498.50px;font-size:13px;line-height:15px;color:#000;">0</div>
<div class="b" style="left:488px;top:497px;width:1px;height:18px;background:#a8b0cc;"></div>
<div class="b" style="left:13px;top:514px;width:476px;height:1px;background:#a8b0cc;"></div>
<div class="t" style="left:16.00px;top:516.70px;font-size:13px;line-height:15px;color:#000;transform:scaleX(1.0225);">QSYS/QSERVER</div>
<div class="b" style="left:178px;top:515px;width:1px;height:18px;background:#a8b0cc;"></div>
<div class="t" style="left:188.35px;top:516.50px;font-size:13px;line-height:15px;color:#000;">0.00</div>
<div class="b" style="left:243px;top:515px;width:1px;height:18px;background:#a8b0cc;"></div>
<div class="t" style="left:280.88px;top:516.50px;font-size:13px;line-height:15px;color:#000;">4</div>
<div class="b" style="left:308px;top:515px;width:1px;height:18px;background:#a8b0cc;"></div>
<div class="t" style="left:345.88px;top:516.50px;font-size:13px;line-height:15px;color:#000;">0</div>
<div class="b" style="left:408px;top:515px;width:1px;height:18px;background:#a8b0cc;"></div>
<div class="t" style="left:445.88px;top:516.50px;font-size:13px;line-height:15px;color:#000;">0</div>
<div class="b" style="left:488px;top:515px;width:1px;height:18px;background:#a8b0cc;"></div>
<div class="b" style="left:13px;top:532px;width:476px;height:1px;background:#a8b0cc;"></div>
<svg width="1024" height="744"><path d="M470.5 498.5 V514 L474 511 L477 518.5 L479.5 517.5 L476.5 510.5 H481.5 Z" fill="#fff" stroke="#000" stroke-width="1"/></svg>
<svg width="1024" height="744" shape-rendering="crispEdges"><rect x="65.50" y="240.30" width="152.50" height="77.20" fill="#63995a" stroke="#000"/><polygon points="61.50,321.50 65.50,317.50 65.50,240.30 61.50,244.30" fill="#b4bac8" stroke="#000" stroke-width="1"/><polygon points="61.50,321.50 65.50,317.50 218.00,317.50 214.00,321.50" fill="#00f700" stroke="#000" stroke-width="1"/><line x1="99.62" y1="321.50" x2="103.62" y2="317.50" stroke="#000" stroke-width="1"/><line x1="137.75" y1="321.50" x2="141.75" y2="317.50" stroke="#000" stroke-width="1"/><line x1="175.88" y1="321.50" x2="179.88" y2="317.50" stroke="#000" stroke-width="1"/><line x1="56.00" y1="321.50" x2="61.50" y2="321.50" stroke="#00e800" stroke-width="1"/><line x1="56.00" y1="313.78" x2="61.50" y2="313.78" stroke="#00e800" stroke-width="1"/><line x1="56.00" y1="306.06" x2="61.50" y2="306.06" stroke="#00e800" stroke-width="1"/><line x1="56.00" y1="298.34" x2="61.50" y2="298.34" stroke="#00e800" stroke-width="1"/><line x1="56.00" y1="290.62" x2="61.50" y2="290.62" stroke="#f7f700" stroke-width="1"/><line x1="56.00" y1="282.90" x2="61.50" y2="282.90" stroke="#f7f700" stroke-width="1"/><line x1="56.00" y1="275.18" x2="61.50" y2="275.18" stroke="#f7f700" stroke-width="1"/><line x1="56.00" y1="267.46" x2="61.50" y2="267.46" stroke="#f7f700" stroke-width="1"/><line x1="56.00" y1="259.74" x2="61.50" y2="259.74" stroke="#f70000" stroke-width="1"/><line x1="56.00" y1="252.02" x2="61.50" y2="252.02" stroke="#f70000" stroke-width="1"/><line x1="56.00" y1="244.30" x2="61.50" y2="244.30" stroke="#f70000" stroke-width="1"/><rect x="288.50" y="237.00" width="244.50" height="66.50" fill="#63995a" stroke="#000"/><polygon points="281.50,310.50 288.50,303.50 288.50,237.00 281.50,244.00" fill="#b4bac8" stroke="#000" stroke-width="1"/><polygon points="281.50,310.50 288.50,303.50 533.00,303.50 526.00,310.50" fill="#b4bac8" stroke="#000" stroke-width="1"/><polygon points="290.49,310.50 297.49,303.50 297.49,300.00 290.49,307.00" fill="#00f700" stroke="#000" stroke-width="1"/><polygon points="281.50,307.00 288.50,300.00 297.49,300.00 290.49,307.00" fill="#00f700" stroke="#000" stroke-width="1"/><rect x="281.50" y="307.00" width="8.99" height="3.50" fill="#00f700" stroke="#000"/><polygon points="300.68,310.50 307.68,303.50 307.68,300.00 300.68,307.00" fill="#00f700" stroke="#000" stroke-width="1"/><polygon points="291.69,307.00 298.69,300.00 307.68,300.00 300.68,307.00" fill="#00f700" stroke="#000" stroke-width="1"/><rect x="291.69" y="307.00" width="8.99" height="3.50" fill="#00f700" stroke="#000"/><polygon points="310.86,310.50 317.86,303.50 317.86,300.00 310.86,307.00" fill="#00f700" stroke="#000" stroke-width="1"/><polygon points="301.88,307.00 308.88,300.00 317.86,300.00 310.86,307.00" fill="#00f700" stroke="#000" stroke-width="1"/><rect x="301.88" y="307.00" width="8.99" height="3.50" fill="#00f700" stroke="#000"/><polygon points="321.05,310.50 328.05,303.50 328.05,300.00 321.05,307.00" fill="#00f700" stroke="#000" stroke-width="1"/><polygon points="312.06,307.00 319.06,300.00 328.05,300.00 321.05,307.00" fill="#00f700" stroke="#000" stroke-width="1"/><rect x="312.06" y="307.00" width="8.99" height="3.50" fill="#00f700" stroke="#000"/><polygon points="331.24,310.50 338.24,303.50 338.24,300.00 331.24,307.00" fill="#00f700" stroke="#000" stroke-width="1"/><polygon points="322.25,307.00 329.25,300.00 338.24,300.00 331.24,307.00" fill="#00f700" stroke="#000" stroke-width="1"/><rect x="322.25" y="307.00" width="8.99" height="3.50" fill="#00f700" stroke="#000"/><polygon points="341.43,310.50 348.43,303.50 348.43,300.00 341.43,307.00" fill="#00f700" stroke="#000" stroke-width="1"/><polygon points="332.44,307.00 339.44,300.00 348.43,300.00 341.43,307.00" fill="#00f700" stroke="#000" stroke-width="1"/><rect x="332.44" y="307.00" width="8.99" height="3.50" fill="#00f700" stroke="#000"/><polygon points="351.61,310.50 358.61,303.50 358.61,300.00 351.61,307.00" fill="#00f700" stroke="#000" stroke-width="1"/><polygon points="342.62,307.00 349.62,300.00 358.61,300.00 351.61,307.00" fill="#00f700" stroke="#000" stroke-width="1"/><rect x="342.62" y="307.00" width="8.99" height="3.50" fill="#00f700" stroke="#000"/><polygon points="361.80,310.50 368.80,303.50 368.80,300.00 361.80,307.00" fill="#00f700" stroke="#000" stroke-width="1"/><polygon points="352.81,307.00 359.81,300.00 368.80,300.00 361.80,307.00" fill="#00f700" stroke="#000" stroke-width="1"/><rect x="352.81" y="307.00" width="8.99" height="3.50" fill="#00f700" stroke="#000"/><polygon points="371.99,310.50 378.99,303.50 378.99,300.00 371.99,307.00" fill="#00f700" stroke="#000" stroke-width="1"/><polygon points="363.00,307.00 370.00,300.00 378.99,300.00 371.99,307.00" fill="#00f700" stroke="#000" stroke-width="1"/><rect x="363.00" y="307.00" width="8.99" height="3.50" fill="#00f700" stroke="#000"/><polygon points="382.18,310.50 389.18,303.50 389.18,300.00 382.18,307.00" fill="#00f700" stroke="#000" stroke-width="1"/><polygon points="373.19,307.00 380.19,300.00 389.18,300.00 382.18,307.00" fill="#00f700" stroke="#000" stroke-width="1"/><rect x="373.19" y="307.00" width="8.99" height="3.50" fill="#00f700" stroke="#000"/><polygon points="392.36,310.50 399.36,303.50 399.36,300.00 392.36,307.00" fill="#00f700" stroke="#000" stroke-width="1"/><polygon points="383.38,307.00 390.38,300.00 399.36,300.00 392.36,307.00" fill="#00f700" stroke="#000" stroke-width="1"/><rect x="383.38" y="307.00" width="8.99" height="3.50" fill="#00f700" stroke="#000"/><polygon points="402.55,310.50 409.55,303.50 409.55,300.00 402.55,307.00" fill="#00f700" stroke="#000" stroke-width="1"/><polygon points="393.56,307.00 400.56,300.00 409.55,300.00 402.55,307.00" fill="#00f700" stroke="#000" stroke-width="1"/><rect x="393.56" y="307.00" width="8.99" height="3.50" fill="#00f700" stroke="#000"/><polygon points="412.74,310.50 419.74,303.50 419.74,300.00 412.74,307.00" fill="#00f700" stroke="#000" stroke-width="1"/><polygon points="403.75,307.00 410.75,300.00 419.74,300.00 412.74,307.00" fill="#00f700" stroke="#000" stroke-width="1"/><rect x="403.75" y="307.00" width="8.99" height="3.50" fill="#00f700" stroke="#000"/><line x1="413.94" y1="310.50" x2="420.94" y2="303.50" stroke="#000" stroke-width="1"/><line x1="424.12" y1="310.50" x2="431.12" y2="303.50" stroke="#000" stroke-width="1"/><line x1="434.31" y1="310.50" x2="441.31" y2="303.50" stroke="#000" stroke-width="1"/><line x1="444.50" y1="310.50" x2="451.50" y2="303.50" stroke="#000" stroke-width="1"/><line x1="454.69" y1="310.50" x2="461.69" y2="303.50" stroke="#000" stroke-width="1"/><line x1="464.88" y1="310.50" x2="471.88" y2="303.50" stroke="#000" stroke-width="1"/><line x1="475.06" y1="310.50" x2="482.06" y2="303.50" stroke="#000" stroke-width="1"/><line x1="485.25" y1="310.50" x2="492.25" y2="303.50" stroke="#000" stroke-width="1"/><line x1="495.44" y1="310.50" x2="502.44" y2="303.50" stroke="#000" stroke-width="1"/><line x1="505.62" y1="310.50" x2="512.62" y2="303.50" stroke="#000" stroke-width="1"/><line x1="515.81" y1="310.50" x2="522.81" y2="303.50" stroke="#000" stroke-width="1"/><line x1="281.50" y1="310.50" x2="526.00" y2="310.50" stroke="#000" stroke-width="1"/><line x1="276.00" y1="310.50" x2="281.50" y2="310.50" stroke="#000" stroke-width="1"/><line x1="276.00" y1="303.90" x2="281.50" y2="303.90" stroke="#000" stroke-width="1"/><line x1="276.00" y1="297.30" x2="281.50" y2="297.30" stroke="#000" stroke-width="1"/><line x1="276.00" y1="290.70" x2="281.50" y2="290.70" stroke="#000" stroke-width="1"/><line x1="276.00" y1="284.10" x2="281.50" y2="284.10" stroke="#000" stroke-width="1"/><line x1="276.00" y1="277.50" x2="281.50" y2="277.50" stroke="#000" stroke-width="1"/><line x1="276.00" y1="270.90" x2="281.50" y2="270.90" stroke="#000" stroke-width="1"/><line x1="276.00" y1="264.30" x2="281.50" y2="264.30" stroke="#000" stroke-width="1"/><line x1="276.00" y1="257.70" x2="281.50" y2="257.70" stroke="#000" stroke-width="1"/><line x1="276.00" y1="251.10" x2="281.50" y2="251.10" stroke="#000" stroke-width="1"/><line x1="276.00" y1="244.50" x2="281.50" y2="244.50" stroke="#000" stroke-width="1"/><line x1="281.50" y1="244.50" x2="281.50" y2="310.50" stroke="#000" stroke-width="1"/><rect x="241" y="322" width="9" height="9" fill="#d3ccc9" stroke="none"/><rect x="241" y="322" width="9" height="1" fill="#fff" stroke="none"/><rect x="241" y="322" width="1" height="9" fill="#fff" stroke="none"/><rect x="249" y="323" width="1" height="8" fill="#5a9a5a" stroke="none"/><rect x="242" y="330" width="8" height="1" fill="#5a9a5a" stroke="none"/><rect x="250" y="322" width="1" height="9" fill="#283050" stroke="none"/><rect x="244" y="325" width="1" height="5" fill="#000" stroke="none"/><rect x="247" y="325.0" width="1" height="5" fill="#000" stroke="none"/><rect x="246" y="326.0" width="1" height="3" fill="#000" stroke="none"/><rect x="245" y="327.0" width="1" height="1" fill="#000" stroke="none"/><rect x="251" y="322" width="9" height="9" fill="#d3ccc9" stroke="none"/><rect x="251" y="322" width="9" height="1" fill="#fff" stroke="none"/><rect x="251" y="322" width="1" height="9" fill="#fff" stroke="none"/><rect x="259" y="323" width="1" height="8" fill="#5a9a5a" stroke="none"/><rect x="252" y="330" width="8" height="1" fill="#5a9a5a" stroke="none"/><rect x="260" y="322" width="1" height="9" fill="#283050" stroke="none"/><rect x="255" y="325.0" width="1" height="5" fill="#000" stroke="none"/><rect x="254" y="326.0" width="1" height="3" fill="#000" stroke="none"/><rect x="253" y="327.0" width="1" height="1" fill="#000" stroke="none"/><rect x="258" y="325.0" width="1" height="5" fill="#000" stroke="none"/><rect x="257" y="326.0" width="1" height="3" fill="#000" stroke="none"/><rect x="256" y="327.0" width="1" height="1" fill="#000" stroke="none"/><rect x="261" y="322" width="9" height="9" fill="#d3ccc9" stroke="none"/><rect x="261" y="322" width="9" height="1" fill="#fff" stroke="none"/><rect x="261" y="322" width="1" height="9" fill="#fff" stroke="none"/><rect x="269" y="323" width="1" height="8" fill="#5a9a5a" stroke="none"/><rect x="262" y="330" width="8" height="1" fill="#5a9a5a" stroke="none"/><rect x="270" y="322" width="1" height="9" fill="#283050" stroke="none"/><rect x="266" y="325.0" width="1" height="5" fill="#000" stroke="none"/><rect x="265" y="326.0" width="1" height="3" fill="#000" stroke="none"/><rect x="264" y="327.0" width="1" height="1" fill="#000" stroke="none"/><rect x="521" y="322" width="9" height="9" fill="#d3ccc9" stroke="none"/><rect x="521" y="322" width="9" height="1" fill="#fff" stroke="none"/><rect x="521" y="322" width="1" height="9" fill="#fff" stroke="none"/><rect x="529" y="323" width="1" height="8" fill="#5a9a5a" stroke="none"/><rect x="522" y="330" width="8" height="1" fill="#5a9a5a" stroke="none"/><rect x="530" y="322" width="1" height="9" fill="#283050" stroke="none"/><rect x="525" y="325.0" width="1" height="5" fill="#000" stroke="none"/><rect x="526" y="326.0" width="1" height="3" fill="#000" stroke="none"/><rect x="527" y="327.0" width="1" height="1" fill="#000" stroke="none"/><rect x="531" y="322" width="9" height="9" fill="#d3ccc9" stroke="none"/><rect x="531" y="322" width="9" height="1" fill="#fff" stroke="none"/><rect x="531" y="322" width="1" height="9" fill="#fff" stroke="none"/><rect x="539" y="323" width="1" height="8" fill="#5a9a5a" stroke="none"/><rect x="532" y="330" width="8" height="1" fill="#5a9a5a" stroke="none"/><rect x="540" y="322" width="1" height="9" fill="#283050" stroke="none"/><rect x="533" y="325.0" width="1" height="5" fill="#000" stroke="none"/><rect x="534" y="326.0" width="1" height="3" fill="#000" stroke="none"/><rect x="535" y="327.0" width="1" height="1" fill="#000" stroke="none"/><rect x="536" y="325.0" width="1" height="5" fill="#000" stroke="none"/><rect x="537" y="326.0" width="1" height="3" fill="#000" stroke="none"/><rect x="538" y="327.0" width="1" height="1" fill="#000" stroke="none"/><rect x="541" y="322" width="9" height="9" fill="#d3ccc9" stroke="none"/><rect x="541" y="322" width="9" height="1" fill="#fff" stroke="none"/><rect x="541" y="322" width="1" height="9" fill="#fff" stroke="none"/><rect x="549" y="323" width="1" height="8" fill="#5a9a5a" stroke="none"/><rect x="542" y="330" width="8" height="1" fill="#5a9a5a" stroke="none"/><rect x="550" y="322" width="1" height="9" fill="#283050" stroke="none"/><rect x="544" y="325.0" width="1" height="5" fill="#000" stroke="none"/><rect x="545" y="326.0" width="1" height="3" fill="#000" stroke="none"/><rect x="546" y="327.0" width="1" height="1" fill="#000" stroke="none"/><rect x="547" y="325" width="1" height="5" fill="#000" stroke="none"/><rect x="606.50" y="351.20" width="379.50" height="65.30" fill="#63995a" stroke="#000"/><polygon points="603.50,420.50 606.50,416.50 606.50,351.20 603.50,355.20" fill="#b4bac8" stroke="#000" stroke-width="1"/><polygon points="603.50,420.50 606.50,416.50 986.00,416.50 983.00,420.50" fill="#d4d8e4" stroke="#000" stroke-width="1"/><line x1="603.50" y1="420.50" x2="606.50" y2="416.50" stroke="#000" stroke-width="1"/><line x1="619.31" y1="420.50" x2="622.31" y2="416.50" stroke="#000" stroke-width="1"/><line x1="635.12" y1="420.50" x2="638.12" y2="416.50" stroke="#000" stroke-width="1"/><line x1="650.94" y1="420.50" x2="653.94" y2="416.50" stroke="#000" stroke-width="1"/><line x1="666.75" y1="420.50" x2="669.75" y2="416.50" stroke="#000" stroke-width="1"/><line x1="682.56" y1="420.50" x2="685.56" y2="416.50" stroke="#000" stroke-width="1"/><line x1="698.38" y1="420.50" x2="701.38" y2="416.50" stroke="#000" stroke-width="1"/><line x1="714.19" y1="420.50" x2="717.19" y2="416.50" stroke="#000" stroke-width="1"/><line x1="730.00" y1="420.50" x2="733.00" y2="416.50" stroke="#000" stroke-width="1"/><line x1="745.81" y1="420.50" x2="748.81" y2="416.50" stroke="#000" stroke-width="1"/><line x1="761.62" y1="420.50" x2="764.62" y2="416.50" stroke="#000" stroke-width="1"/><line x1="777.44" y1="420.50" x2="780.44" y2="416.50" stroke="#000" stroke-width="1"/><line x1="793.25" y1="420.50" x2="796.25" y2="416.50" stroke="#000" stroke-width="1"/><line x1="809.06" y1="420.50" x2="812.06" y2="416.50" stroke="#000" stroke-width="1"/><line x1="824.88" y1="420.50" x2="827.88" y2="416.50" stroke="#000" stroke-width="1"/><line x1="840.69" y1="420.50" x2="843.69" y2="416.50" stroke="#000" stroke-width="1"/><line x1="856.50" y1="420.50" x2="859.50" y2="416.50" stroke="#000" stroke-width="1"/><line x1="872.31" y1="420.50" x2="875.31" y2="416.50" stroke="#000" stroke-width="1"/><line x1="888.12" y1="420.50" x2="891.12" y2="416.50" stroke="#000" stroke-width="1"/><line x1="903.94" y1="420.50" x2="906.94" y2="416.50" stroke="#000" stroke-width="1"/><line x1="919.75" y1="420.50" x2="922.75" y2="416.50" stroke="#000" stroke-width="1"/><line x1="935.56" y1="420.50" x2="938.56" y2="416.50" stroke="#000" stroke-width="1"/><line x1="951.38" y1="420.50" x2="954.38" y2="416.50" stroke="#000" stroke-width="1"/><line x1="967.19" y1="420.50" x2="970.19" y2="416.50" stroke="#000" stroke-width="1"/><polygon points="603.50,419.50 607.50,416.50 622.31,416.50 618.31,419.50" fill="#00f700" stroke="#000" stroke-width="1"/><polygon points="619.31,419.50 623.31,416.50 638.12,416.50 634.12,419.50" fill="#00f700" stroke="#000" stroke-width="1"/><polygon points="635.12,419.50 639.12,416.50 653.94,416.50 649.94,419.50" fill="#00f700" stroke="#000" stroke-width="1"/><polygon points="650.94,419.50 654.94,415.50 669.75,415.50 665.75,419.50" fill="#00f700" stroke="#000" stroke-width="1"/><polygon points="666.75,419.50 670.75,415.50 685.56,415.50 681.56,419.50" fill="#00f700" stroke="#000" stroke-width="1"/><polygon points="682.56,419.50 686.56,415.50 701.38,415.50 697.38,419.50" fill="#00f700" stroke="#000" stroke-width="1"/><polygon points="698.38,419.50 702.38,415.50 717.19,415.50 713.19,419.50" fill="#00f700" stroke="#000" stroke-width="1"/><polygon points="714.19,419.50 718.19,415.50 733.00,415.50 729.00,419.50" fill="#00f700" stroke="#000" stroke-width="1"/><polygon points="730.00,419.50 734.00,415.00 748.81,415.00 744.81,419.50" fill="#00f700" stroke="#000" stroke-width="1"/><polygon points="745.81,419.50 749.81,415.00 764.62,415.00 760.62,419.50" fill="#00f700" stroke="#000" stroke-width="1"/><polygon points="761.62,419.50 765.62,415.00 780.44,415.00 776.44,419.50" fill="#00f700" stroke="#000" stroke-width="1"/><polygon points="777.44,419.50 781.44,414.00 796.25,414.00 792.25,419.50" fill="#00f700" stroke="#000" stroke-width="1"/><polygon points="793.25,419.50 797.25,415.00 812.06,415.00 808.06,419.50" fill="#00f700" stroke="#000" stroke-width="1"/><rect x="603.5" y="419.0" width="379.5" height="1.5" fill="#0000d8" stroke="none"/><rect x="811.0625" y="415.0" width="66.4" height="2" fill="#0000d8" stroke="none"/><rect x="872.3125" y="415.5" width="112.7" height="2" fill="#0000d8" stroke="none"/><rect x="606.5" y="415.0" width="10" height="1.5" fill="#0000d8" stroke="none"/><line x1="598.00" y1="420.50" x2="603.50" y2="420.50" stroke="#00e800" stroke-width="1"/><line x1="598.00" y1="413.90" x2="603.50" y2="413.90" stroke="#00e800" stroke-width="1"/><line x1="598.00" y1="407.30" x2="603.50" y2="407.30" stroke="#00e800" stroke-width="1"/><line x1="598.00" y1="400.70" x2="603.50" y2="400.70" stroke="#00e800" stroke-width="1"/><line x1="598.00" y1="394.10" x2="603.50" y2="394.10" stroke="#00e800" stroke-width="1"/><line x1="598.00" y1="387.50" x2="603.50" y2="387.50" stroke="#f7f700" stroke-width="1"/><line x1="598.00" y1="380.90" x2="603.50" y2="380.90" stroke="#f7f700" stroke-width="1"/><line x1="598.00" y1="374.30" x2="603.50" y2="374.30" stroke="#f7f700" stroke-width="1"/><line x1="598.00" y1="367.70" x2="603.50" y2="367.70" stroke="#f70000" stroke-width="1"/><line x1="598.00" y1="361.10" x2="603.50" y2="361.10" stroke="#f70000" stroke-width="1"/><line x1="598.00" y1="354.50" x2="603.50" y2="354.50" stroke="#f70000" stroke-width="1"/><rect x="551" y="432" width="9" height="9" fill="#d3ccc9" stroke="none"/><rect x="551" y="432" width="9" height="1" fill="#fff" stroke="none"/><rect x="551" y="432" width="1" height="9" fill="#fff" stroke="none"/><rect x="559" y="433" width="1" height="8" fill="#5a9a5a" stroke="none"/><rect x="552" y="440" width="8" height="1" fill="#5a9a5a" stroke="none"/><rect x="560" y="432" width="1" height="9" fill="#283050" stroke="none"/><rect x="554" y="435" width="1" height="5" fill="#000" stroke="none"/><rect x="557" y="435.0" width="1" height="5" fill="#000" stroke="none"/><rect x="556" y="436.0" width="1" height="3" fill="#000" stroke="none"/><rect x="555" y="437.0" width="1" height="1" fill="#000" stroke="none"/><rect x="561" y="432" width="9" height="9" fill="#d3ccc9" stroke="none"/><rect x="561" y="432" width="9" height="1" fill="#fff" stroke="none"/><rect x="561" y="432" width="1" height="9" fill="#fff" stroke="none"/><rect x="569" y="433" width="1" height="8" fill="#5a9a5a" stroke="none"/><rect x="562" y="440" width="8" height="1" fill="#5a9a5a" stroke="none"/><rect x="570" y="432" width="1" height="9" fill="#283050" stroke="none"/><rect x="565" y="435.0" width="1" height="5" fill="#000" stroke="none"/><rect x="564" y="436.0" width="1" height="3" fill="#000" stroke="none"/><rect x="563" y="437.0" width="1" height="1" fill="#000" stroke="none"/><rect x="568" y="435.0" width="1" height="5" fill="#000" stroke="none"/><rect x="567" y="436.0" width="1" height="3" fill="#000" stroke="none"/><rect x="566" y="437.0" width="1" height="1" fill="#000" stroke="none"/><rect x="571" y="432" width="9" height="9" fill="#d3ccc9" stroke="none"/><rect x="571" y="432" width="9" height="1" fill="#fff" stroke="none"/><rect x="571" y="432" width="1" height="9" fill="#fff" stroke="none"/><rect x="579" y="433" width="1" height="8" fill="#5a9a5a" stroke="none"/><rect x="572" y="440" width="8" height="1" fill="#5a9a5a" stroke="none"/><rect x="580" y="432" width="1" height="9" fill="#283050" stroke="none"/><rect x="576" y="435.0" width="1" height="5" fill="#000" stroke="none"/><rect x="575" y="436.0" width="1" height="3" fill="#000" stroke="none"/><rect x="574" y="437.0" width="1" height="1" fill="#000" stroke="none"/><rect x="991" y="432" width="9" height="9" fill="#d3ccc9" stroke="none"/><rect x="991" y="432" width="9" height="1" fill="#fff" stroke="none"/><rect x="991" y="432" width="1" height="9" fill="#fff" stroke="none"/><rect x="999" y="433" width="1" height="8" fill="#5a9a5a" stroke="none"/><rect x="992" y="440" width="8" height="1" fill="#5a9a5a" stroke="none"/><rect x="1000" y="432" width="1" height="9" fill="#283050" stroke="none"/><rect x="995" y="435.0" width="1" height="5" fill="#000" stroke="none"/><rect x="996" y="436.0" width="1" height="3" fill="#000" stroke="none"/><rect x="997" y="437.0" width="1" height="1" fill="#000" stroke="none"/><rect x="1001" y="432" width="9" height="9" fill="#d3ccc9" stroke="none"/><rect x="1001" y="432" width="9" height="1" fill="#fff" stroke="none"/><rect x="1001" y="432" width="1" height="9" fill="#fff" stroke="none"/><rect x="1009" y="433" width="1" height="8" fill="#5a9a5a" stroke="none"/><rect x="1002" y="440" width="8" height="1" fill="#5a9a5a" stroke="none"/><rect x="1010" y="432" width="1" height="9" fill="#283050" stroke="none"/><rect x="1003" y="435.0" width="1" height="5" fill="#000" stroke="none"/><rect x="1004" y="436.0" width="1" height="3" fill="#000" stroke="none"/><rect x="1005" y="437.0" width="1" height="1" fill="#000" stroke="none"/><rect x="1006" y="435.0" width="1" height="5" fill="#000" stroke="none"/><rect x="1007" y="436.0" width="1" height="3" fill="#000" stroke="none"/><rect x="1008" y="437.0" width="1" height="1" fill="#000" stroke="none"/><rect x="1011" y="432" width="9" height="9" fill="#d3ccc9" stroke="none"/><rect x="1011" y="432" width="9" height="1" fill="#fff" stroke="none"/><rect x="1011" y="432" width="1" height="9" fill="#fff" stroke="none"/><rect x="1019" y="433" width="1" height="8" fill="#5a9a5a" stroke="none"/><rect x="1012" y="440" width="8" height="1" fill="#5a9a5a" stroke="none"/><rect x="1020" y="432" width="1" height="9" fill="#283050" stroke="none"/><rect x="1014" y="435.0" width="1" height="5" fill="#000" stroke="none"/><rect x="1015" y="436.0" width="1" height="3" fill="#000" stroke="none"/><rect x="1016" y="437.0" width="1" height="1" fill="#000" stroke="none"/><rect x="1017" y="435" width="1" height="5" fill="#000" stroke="none"/><rect x="606.50" y="465.00" width="400.00" height="65.50" fill="#63995a" stroke="#000"/><polygon points="603.50,533.50 606.50,530.50 606.50,465.00 603.50,468.00" fill="#b4bac8" stroke="#000" stroke-width="1"/><polygon points="603.50,533.50 606.50,530.50 1006.50,530.50 1003.50,533.50" fill="#b4bac8" stroke="#000" stroke-width="1"/><polygon points="616.23,533.50 619.23,530.50 619.23,525.50 616.23,528.50" fill="#00f700" stroke="#000" stroke-width="1"/><polygon points="603.50,528.50 606.50,525.50 619.23,525.50 616.23,528.50" fill="#00f700" stroke="#000" stroke-width="1"/><rect x="603.50" y="528.50" width="12.73" height="5.00" fill="#00f700" stroke="#000"/><polygon points="629.57,533.50 632.57,530.50 632.57,525.50 629.57,528.50" fill="#00f700" stroke="#000" stroke-width="1"/><polygon points="616.83,528.50 619.83,525.50 632.57,525.50 629.57,528.50" fill="#00f700" stroke="#000" stroke-width="1"/><rect x="616.83" y="528.50" width="12.73" height="5.00" fill="#00f700" stroke="#000"/><polygon points="642.90,533.50 645.90,530.50 645.90,526.50 642.90,529.50" fill="#00f700" stroke="#000" stroke-width="1"/><polygon points="630.17,529.50 633.17,526.50 645.90,526.50 642.90,529.50" fill="#00f700" stroke="#000" stroke-width="1"/><rect x="630.17" y="529.50" width="12.73" height="4.00" fill="#00f700" stroke="#000"/><polygon points="656.23,533.50 659.23,530.50 659.23,526.50 656.23,529.50" fill="#00f700" stroke="#000" stroke-width="1"/><polygon points="643.50,529.50 646.50,526.50 659.23,526.50 656.23,529.50" fill="#00f700" stroke="#000" stroke-width="1"/><rect x="643.50" y="529.50" width="12.73" height="4.00" fill="#00f700" stroke="#000"/><polygon points="669.57,533.50 672.57,530.50 672.57,525.00 669.57,528.00" fill="#00f700" stroke="#000" stroke-width="1"/><polygon points="656.83,528.00 659.83,525.00 672.57,525.00 669.57,528.00" fill="#00f700" stroke="#000" stroke-width="1"/><rect x="656.83" y="528.00" width="12.73" height="5.50" fill="#00f700" stroke="#000"/><polygon points="682.90,533.50 685.90,530.50 685.90,526.20 682.90,529.20" fill="#00f700" stroke="#000" stroke-width="1"/><polygon points="670.17,529.20 673.17,526.20 685.90,526.20 682.90,529.20" fill="#00f700" stroke="#000" stroke-width="1"/><rect x="670.17" y="529.20" width="12.73" height="4.30" fill="#00f700" stroke="#000"/><polygon points="696.23,533.50 699.23,530.50 699.23,527.00 696.23,530.00" fill="#00f700" stroke="#000" stroke-width="1"/><polygon points="683.50,530.00 686.50,527.00 699.23,527.00 696.23,530.00" fill="#00f700" stroke="#000" stroke-width="1"/><rect x="683.50" y="530.00" width="12.73" height="3.50" fill="#00f700" stroke="#000"/><polygon points="709.57,533.50 712.57,530.50 712.57,527.00 709.57,530.00" fill="#00f700" stroke="#000" stroke-width="1"/><polygon points="696.83,530.00 699.83,527.00 712.57,527.00 709.57,530.00" fill="#00f700" stroke="#000" stroke-width="1"/><rect x="696.83" y="530.00" width="12.73" height="3.50" fill="#00f700" stroke="#000"/><polygon points="722.90,533.50 725.90,530.50 725.90,527.00 722.90,530.00" fill="#00f700" stroke="#000" stroke-width="1"/><polygon points="710.17,530.00 713.17,527.00 725.90,527.00 722.90,530.00" fill="#00f700" stroke="#000" stroke-width="1"/><rect x="710.17" y="530.00" width="12.73" height="3.50" fill="#00f700" stroke="#000"/><polygon points="736.23,533.50 739.23,530.50 739.23,527.00 736.23,530.00" fill="#00f700" stroke="#000" stroke-width="1"/><polygon points="723.50,530.00 726.50,527.00 739.23,527.00 736.23,530.00" fill="#00f700" stroke="#000" stroke-width="1"/><rect x="723.50" y="530.00" width="12.73" height="3.50" fill="#00f700" stroke="#000"/><polygon points="749.57,533.50 752.57,530.50 752.57,526.20 749.57,529.20" fill="#00f700" stroke="#000" stroke-width="1"/><polygon points="736.83,529.20 739.83,526.20 752.57,526.20 749.57,529.20" fill="#00f700" stroke="#000" stroke-width="1"/><rect x="736.83" y="529.20" width="12.73" height="4.30" fill="#00f700" stroke="#000"/><polygon points="762.90,533.50 765.90,530.50 765.90,527.00 762.90,530.00" fill="#00f700" stroke="#000" stroke-width="1"/><polygon points="750.17,530.00 753.17,527.00 765.90,527.00 762.90,530.00" fill="#00f700" stroke="#000" stroke-width="1"/><rect x="750.17" y="530.00" width="12.73" height="3.50" fill="#00f700" stroke="#000"/><polygon points="776.23,533.50 779.23,530.50 779.23,527.90 776.23,530.90" fill="#00f700" stroke="#000" stroke-width="1"/><polygon points="763.50,530.90 766.50,527.90 779.23,527.90 776.23,530.90" fill="#00f700" stroke="#000" stroke-width="1"/><rect x="763.50" y="530.90" width="12.73" height="2.60" fill="#00f700" stroke="#000"/><polygon points="789.57,533.50 792.57,530.50 792.57,527.90 789.57,530.90" fill="#00f700" stroke="#000" stroke-width="1"/><polygon points="776.83,530.90 779.83,527.90 792.57,527.90 789.57,530.90" fill="#00f700" stroke="#000" stroke-width="1"/><rect x="776.83" y="530.90" width="12.73" height="2.60" fill="#00f700" stroke="#000"/><polygon points="802.90,533.50 805.90,530.50 805.90,527.90 802.90,530.90" fill="#00f700" stroke="#000" stroke-width="1"/><polygon points="790.17,530.90 793.17,527.90 805.90,527.90 802.90,530.90" fill="#00f700" stroke="#000" stroke-width="1"/><rect x="790.17" y="530.90" width="12.73" height="2.60" fill="#00f700" stroke="#000"/><polygon points="816.23,533.50 819.23,530.50 819.23,527.90 816.23,530.90" fill="#00f700" stroke="#000" stroke-width="1"/><polygon points="803.50,530.90 806.50,527.90 819.23,527.90 816.23,530.90" fill="#00f700" stroke="#000" stroke-width="1"/><rect x="803.50" y="530.90" width="12.73" height="2.60" fill="#00f700" stroke="#000"/><polygon points="829.57,533.50 832.57,530.50 832.57,527.00 829.57,530.00" fill="#00f700" stroke="#000" stroke-width="1"/><polygon points="816.83,530.00 819.83,527.00 832.57,527.00 829.57,530.00" fill="#00f700" stroke="#000" stroke-width="1"/><rect x="816.83" y="530.00" width="12.73" height="3.50" fill="#00f700" stroke="#000"/><polygon points="842.90,533.50 845.90,530.50 845.90,527.90 842.90,530.90" fill="#00f700" stroke="#000" stroke-width="1"/><polygon points="830.17,530.90 833.17,527.90 845.90,527.90 842.90,530.90" fill="#00f700" stroke="#000" stroke-width="1"/><rect x="830.17" y="530.90" width="12.73" height="2.60" fill="#00f700" stroke="#000"/><polygon points="856.23,533.50 859.23,530.50 859.23,527.00 856.23,530.00" fill="#00f700" stroke="#000" stroke-width="1"/><polygon points="843.50,530.00 846.50,527.00 859.23,527.00 856.23,530.00" fill="#00f700" stroke="#000" stroke-width="1"/><rect x="843.50" y="530.00" width="12.73" height="3.50" fill="#00f700" stroke="#000"/><polygon points="869.57,533.50 872.57,530.50 872.57,527.90 869.57,530.90" fill="#00f700" stroke="#000" stroke-width="1"/><polygon points="856.83,530.90 859.83,527.90 872.57,527.90 869.57,530.90" fill="#00f700" stroke="#000" stroke-width="1"/><rect x="856.83" y="530.90" width="12.73" height="2.60" fill="#00f700" stroke="#000"/><polygon points="882.90,533.50 885.90,530.50 885.90,527.90 882.90,530.90" fill="#00f700" stroke="#000" stroke-width="1"/><polygon points="870.17,530.90 873.17,527.90 885.90,527.90 882.90,530.90" fill="#00f700" stroke="#000" stroke-width="1"/><rect x="870.17" y="530.90" width="12.73" height="2.60" fill="#00f700" stroke="#000"/><line x1="883.50" y1="533.50" x2="886.50" y2="530.50" stroke="#000" stroke-width="1"/><polygon points="909.57,533.50 912.57,530.50 912.57,526.20 909.57,529.20" fill="#00f700" stroke="#000" stroke-width="1"/><polygon points="896.83,529.20 899.83,526.20 912.57,526.20 909.57,529.20" fill="#00f700" stroke="#000" stroke-width="1"/><rect x="896.83" y="529.20" width="12.73" height="4.30" fill="#00f700" stroke="#000"/><polygon points="922.90,533.50 925.90,530.50 925.90,527.00 922.90,530.00" fill="#00f700" stroke="#000" stroke-width="1"/><polygon points="910.17,530.00 913.17,527.00 925.90,527.00 922.90,530.00" fill="#00f700" stroke="#000" stroke-width="1"/><rect x="910.17" y="530.00" width="12.73" height="3.50" fill="#00f700" stroke="#000"/><polygon points="936.23,533.50 939.23,530.50 939.23,526.20 936.23,529.20" fill="#00f700" stroke="#000" stroke-width="1"/><polygon points="923.50,529.20 926.50,526.20 939.23,526.20 936.23,529.20" fill="#00f700" stroke="#000" stroke-width="1"/><rect x="923.50" y="529.20" width="12.73" height="4.30" fill="#00f700" stroke="#000"/><polygon points="949.57,533.50 952.57,530.50 952.57,526.20 949.57,529.20" fill="#00f700" stroke="#000" stroke-width="1"/><polygon points="936.83,529.20 939.83,526.20 952.57,526.20 949.57,529.20" fill="#00f700" stroke="#000" stroke-width="1"/><rect x="936.83" y="529.20" width="12.73" height="4.30" fill="#00f700" stroke="#000"/><polygon points="962.90,533.50 965.90,530.50 965.90,526.20 962.90,529.20" fill="#00f700" stroke="#000" stroke-width="1"/><polygon points="950.17,529.20 953.17,526.20 965.90,526.20 962.90,529.20" fill="#00f700" stroke="#000" stroke-width="1"/><rect x="950.17" y="529.20" width="12.73" height="4.30" fill="#00f700" stroke="#000"/><polygon points="976.23,533.50 979.23,530.50 979.23,527.00 976.23,530.00" fill="#00f700" stroke="#000" stroke-width="1"/><polygon points="963.50,530.00 966.50,527.00 979.23,527.00 976.23,530.00" fill="#00f700" stroke="#000" stroke-width="1"/><rect x="963.50" y="530.00" width="12.73" height="3.50" fill="#00f700" stroke="#000"/><polygon points="989.57,533.50 992.57,530.50 992.57,527.50 989.57,530.50" fill="#00f700" stroke="#000" stroke-width="1"/><polygon points="976.83,530.50 979.83,527.50 992.57,527.50 989.57,530.50" fill="#00f700" stroke="#000" stroke-width="1"/><rect x="976.83" y="530.50" width="12.73" height="3.00" fill="#00f700" stroke="#000"/><polygon points="1002.90,533.50 1005.90,530.50 1005.90,527.90 1002.90,530.90" fill="#00f700" stroke="#000" stroke-width="1"/><polygon points="990.17,530.90 993.17,527.90 1005.90,527.90 1002.90,530.90" fill="#00f700" stroke="#000" stroke-width="1"/><rect x="990.17" y="530.90" width="12.73" height="2.60" fill="#00f700" stroke="#000"/><line x1="598.00" y1="533.50" x2="603.50" y2="533.50" stroke="#00e800" stroke-width="1"/><line x1="598.00" y1="527.00" x2="603.50" y2="527.00" stroke="#00e800" stroke-width="1"/><line x1="598.00" y1="520.50" x2="603.50" y2="520.50" stroke="#00e800" stroke-width="1"/><line x1="598.00" y1="514.00" x2="603.50" y2="514.00" stroke="#00e800" stroke-width="1"/><line x1="598.00" y1="507.50" x2="603.50" y2="507.50" stroke="#00e800" stroke-width="1"/><line x1="598.00" y1="501.00" x2="603.50" y2="501.00" stroke="#f7f700" stroke-width="1"/><line x1="598.00" y1="494.50" x2="603.50" y2="494.50" stroke="#f7f700" stroke-width="1"/><line x1="598.00" y1="488.00" x2="603.50" y2="488.00" stroke="#f7f700" stroke-width="1"/><line x1="598.00" y1="481.50" x2="603.50" y2="481.50" stroke="#f70000" stroke-width="1"/><line x1="598.00" y1="475.00" x2="603.50" y2="475.00" stroke="#f70000" stroke-width="1"/><line x1="598.00" y1="468.50" x2="603.50" y2="468.50" stroke="#f70000" stroke-width="1"/><rect x="551" y="562" width="9" height="9" fill="#d3ccc9" stroke="none"/><rect x="551" y="562" width="9" height="1" fill="#fff" stroke="none"/><rect x="551" y="562" width="1" height="9" fill="#fff" stroke="none"/><rect x="559" y="563" width="1" height="8" fill="#5a9a5a" stroke="none"/><rect x="552" y="570" width="8" height="1" fill="#5a9a5a" stroke="none"/><rect x="560" y="562" width="1" height="9" fill="#283050" stroke="none"/><rect x="554" y="565" width="1" height="5" fill="#000" stroke="none"/><rect x="557" y="565.0" width="1" height="5" fill="#000" stroke="none"/><rect x="556" y="566.0" width="1" height="3" fill="#000" stroke="none"/><rect x="555" y="567.0" width="1" height="1" fill="#000" stroke="none"/><rect x="561" y="562" width="9" height="9" fill="#d3ccc9" stroke="none"/><rect x="561" y="562" width="9" height="1" fill="#fff" stroke="none"/><rect x="561" y="562" width="1" height="9" fill="#fff" stroke="none"/><rect x="569" y="563" width="1" height="8" fill="#5a9a5a" stroke="none"/><rect x="562" y="570" width="8" height="1" fill="#5a9a5a" stroke="none"/><rect x="570" y="562" width="1" height="9" fill="#283050" stroke="none"/><rect x="565" y="565.0" width="1" height="5" fill="#000" stroke="none"/><rect x="564" y="566.0" width="1" height="3" fill="#000" stroke="none"/><rect x="563" y="567.0" width="1" height="1" fill="#000" stroke="none"/><rect x="568" y="565.0" width="1" height="5" fill="#000" stroke="none"/><rect x="567" y="566.0" width="1" height="3" fill="#000" stroke="none"/><rect x="566" y="567.0" width="1" height="1" fill="#000" stroke="none"/><rect x="571" y="562" width="9" height="9" fill="#d3ccc9" stroke="none"/><rect x="571" y="562" width="9" height="1" fill="#fff" stroke="none"/><rect x="571" y="562" width="1" height="9" fill="#fff" stroke="none"/><rect x="579" y="563" width="1" height="8" fill="#5a9a5a" stroke="none"/><rect x="572" y="570" width="8" height="1" fill="#5a9a5a" stroke="none"/><rect x="580" y="562" width="1" height="9" fill="#283050" stroke="none"/><rect x="576" y="565.0" width="1" height="5" fill="#000" stroke="none"/><rect x="575" y="566.0" width="1" height="3" fill="#000" stroke="none"/><rect x="574" y="567.0" width="1" height="1" fill="#000" stroke="none"/><rect x="991" y="562" width="9" height="9" fill="#d3ccc9" stroke="none"/><rect x="991" y="562" width="9" height="1" fill="#fff" stroke="none"/><rect x="991" y="562" width="1" height="9" fill="#fff" stroke="none"/><rect x="999" y="563" width="1" height="8" fill="#5a9a5a" stroke="none"/><rect x="992" y="570" width="8" height="1" fill="#5a9a5a" stroke="none"/><rect x="1000" y="562" width="1" height="9" fill="#283050" stroke="none"/><rect x="995" y="565.0" width="1" height="5" fill="#000" stroke="none"/><rect x="996" y="566.0" width="1" height="3" fill="#000" stroke="none"/><rect x="997" y="567.0" width="1" height="1" fill="#000" stroke="none"/><rect x="1001" y="562" width="9" height="9" fill="#d3ccc9" stroke="none"/><rect x="1001" y="562" width="9" height="1" fill="#fff" stroke="none"/><rect x="1001" y="562" width="1" height="9" fill="#fff" stroke="none"/><rect x="1009" y="563" width="1" height="8" fill="#5a9a5a" stroke="none"/><rect x="1002" y="570" width="8" height="1" fill="#5a9a5a" stroke="none"/><rect x="1010" y="562" width="1" height="9" fill="#283050" stroke="none"/><rect x="1003" y="565.0" width="1" height="5" fill="#000" stroke="none"/><rect x="1004" y="566.0" width="1" height="3" fill="#000" stroke="none"/><rect x="1005" y="567.0" width="1" height="1" fill="#000" stroke="none"/><rect x="1006" y="565.0" width="1" height="5" fill="#000" stroke="none"/><rect x="1007" y="566.0" width="1" height="3" fill="#000" stroke="none"/><rect x="1008" y="567.0" width="1" height="1" fill="#000" stroke="none"/><rect x="1011" y="562" width="9" height="9" fill="#d3ccc9" stroke="none"/><rect x="1011" y="562" width="9" height="1" fill="#fff" stroke="none"/><rect x="1011" y="562" width="1" height="9" fill="#fff" stroke="none"/><rect x="1019" y="563" width="1" height="8" fill="#5a9a5a" stroke="none"/><rect x="1012" y="570" width="8" height="1" fill="#5a9a5a" stroke="none"/><rect x="1020" y="562" width="1" height="9" fill="#283050" stroke="none"/><rect x="1014" y="565.0" width="1" height="5" fill="#000" stroke="none"/><rect x="1015" y="566.0" width="1" height="3" fill="#000" stroke="none"/><rect x="1016" y="567.0" width="1" height="1" fill="#000" stroke="none"/><rect x="1017" y="565" width="1" height="5" fill="#000" stroke="none"/><rect x="55.50" y="592.50" width="332.00" height="58.00" fill="#63995a" stroke="#000"/><polygon points="49.50,656.50 55.50,650.50 55.50,592.50 49.50,598.50" fill="#b4bac8" stroke="#000" stroke-width="1"/><polygon points="49.50,656.50 55.50,650.50 387.50,650.50 381.50,656.50" fill="#b4bac8" stroke="#000" stroke-width="1"/><polygon points="60.50,656.50 66.00,651.00 66.00,600.83 60.50,606.33" fill="#f70000" stroke="#000" stroke-width="1"/><polygon points="49.50,606.33 55.00,600.83 66.00,600.83 60.50,606.33" fill="#f70000" stroke="#000" stroke-width="1"/><rect x="49.50" y="606.33" width="11.00" height="50.17" fill="#f70000" stroke="#000"/><polygon points="71.50,656.50 77.00,651.00 77.00,611.27 71.50,616.77" fill="#f7f700" stroke="#000" stroke-width="1"/><polygon points="60.50,616.77 66.00,611.27 77.00,611.27 71.50,616.77" fill="#f7f700" stroke="#000" stroke-width="1"/><rect x="60.50" y="616.77" width="11.00" height="39.73" fill="#f7f700" stroke="#000"/><polygon points="82.50,656.50 88.00,651.00 88.00,611.27 82.50,616.77" fill="#f7f700" stroke="#000" stroke-width="1"/><polygon points="71.50,616.77 77.00,611.27 88.00,611.27 82.50,616.77" fill="#f7f700" stroke="#000" stroke-width="1"/><rect x="71.50" y="616.77" width="11.00" height="39.73" fill="#f7f700" stroke="#000"/><polygon points="93.50,656.50 99.00,651.00 99.00,600.83 93.50,606.33" fill="#f70000" stroke="#000" stroke-width="1"/><polygon points="82.50,606.33 88.00,600.83 99.00,600.83 93.50,606.33" fill="#f70000" stroke="#000" stroke-width="1"/><rect x="82.50" y="606.33" width="11.00" height="50.17" fill="#f70000" stroke="#000"/><polygon points="104.50,656.50 110.00,651.00 110.00,600.83 104.50,606.33" fill="#f70000" stroke="#000" stroke-width="1"/><polygon points="93.50,606.33 99.00,600.83 110.00,600.83 104.50,606.33" fill="#f70000" stroke="#000" stroke-width="1"/><rect x="93.50" y="606.33" width="11.00" height="50.17" fill="#f70000" stroke="#000"/><polygon points="115.50,656.50 121.00,651.00 121.00,600.83 115.50,606.33" fill="#f70000" stroke="#000" stroke-width="1"/><polygon points="104.50,606.33 110.00,600.83 121.00,600.83 115.50,606.33" fill="#f70000" stroke="#000" stroke-width="1"/><rect x="104.50" y="606.33" width="11.00" height="50.17" fill="#f70000" stroke="#000"/><polygon points="126.50,656.50 132.00,651.00 132.00,600.83 126.50,606.33" fill="#f70000" stroke="#000" stroke-width="1"/><polygon points="115.50,606.33 121.00,600.83 132.00,600.83 126.50,606.33" fill="#f70000" stroke="#000" stroke-width="1"/><rect x="115.50" y="606.33" width="11.00" height="50.17" fill="#f70000" stroke="#000"/><polygon points="138.50,656.50 144.00,651.00 144.00,600.83 138.50,606.33" fill="#f70000" stroke="#000" stroke-width="1"/><polygon points="126.50,606.33 132.00,600.83 144.00,600.83 138.50,606.33" fill="#f70000" stroke="#000" stroke-width="1"/><rect x="126.50" y="606.33" width="12.00" height="50.17" fill="#f70000" stroke="#000"/><polygon points="149.50,656.50 155.00,651.00 155.00,600.83 149.50,606.33" fill="#f70000" stroke="#000" stroke-width="1"/><polygon points="138.50,606.33 144.00,600.83 155.00,600.83 149.50,606.33" fill="#f70000" stroke="#000" stroke-width="1"/><rect x="138.50" y="606.33" width="11.00" height="50.17" fill="#f70000" stroke="#000"/><polygon points="160.50,656.50 166.00,651.00 166.00,600.83 160.50,606.33" fill="#f70000" stroke="#000" stroke-width="1"/><polygon points="149.50,606.33 155.00,600.83 166.00,600.83 160.50,606.33" fill="#f70000" stroke="#000" stroke-width="1"/><rect x="149.50" y="606.33" width="11.00" height="50.17" fill="#f70000" stroke="#000"/><polygon points="171.50,656.50 177.00,651.00 177.00,600.83 171.50,606.33" fill="#f70000" stroke="#000" stroke-width="1"/><polygon points="160.50,606.33 166.00,600.83 177.00,600.83 171.50,606.33" fill="#f70000" stroke="#000" stroke-width="1"/><rect x="160.50" y="606.33" width="11.00" height="50.17" fill="#f70000" stroke="#000"/><polygon points="182.50,656.50 188.00,651.00 188.00,621.42 182.50,626.92" fill="#f7f700" stroke="#000" stroke-width="1"/><polygon points="171.50,626.92 177.00,621.42 188.00,621.42 182.50,626.92" fill="#f7f700" stroke="#000" stroke-width="1"/><rect x="171.50" y="626.92" width="11.00" height="29.58" fill="#f7f700" stroke="#000"/><polygon points="193.50,656.50 199.00,651.00 199.00,605.18 193.50,610.68" fill="#f70000" stroke="#000" stroke-width="1"/><polygon points="182.50,610.68 188.00,605.18 199.00,605.18 193.50,610.68" fill="#f70000" stroke="#000" stroke-width="1"/><rect x="182.50" y="610.68" width="11.00" height="45.82" fill="#f70000" stroke="#000"/><polygon points="204.50,656.50 210.00,651.00 210.00,615.04 204.50,620.54" fill="#f7f700" stroke="#000" stroke-width="1"/><polygon points="193.50,620.54 199.00,615.04 210.00,615.04 204.50,620.54" fill="#f7f700" stroke="#000" stroke-width="1"/><rect x="193.50" y="620.54" width="11.00" height="35.96" fill="#f7f700" stroke="#000"/><polygon points="215.50,656.50 221.00,651.00 221.00,603.44 215.50,608.94" fill="#f70000" stroke="#000" stroke-width="1"/><polygon points="204.50,608.94 210.00,603.44 221.00,603.44 215.50,608.94" fill="#f70000" stroke="#000" stroke-width="1"/><rect x="204.50" y="608.94" width="11.00" height="47.56" fill="#f70000" stroke="#000"/><polygon points="226.50,656.50 232.00,651.00 232.00,603.44 226.50,608.94" fill="#f70000" stroke="#000" stroke-width="1"/><polygon points="215.50,608.94 221.00,603.44 232.00,603.44 226.50,608.94" fill="#f70000" stroke="#000" stroke-width="1"/><rect x="215.50" y="608.94" width="11.00" height="47.56" fill="#f70000" stroke="#000"/><line x1="226.50" y1="656.50" x2="232.50" y2="650.50" stroke="#000" stroke-width="1"/><line x1="237.50" y1="656.50" x2="243.50" y2="650.50" stroke="#000" stroke-width="1"/><polygon points="259.50,656.50 265.00,651.00 265.00,605.18 259.50,610.68" fill="#f70000" stroke="#000" stroke-width="1"/><polygon points="248.50,610.68 254.00,605.18 265.00,605.18 259.50,610.68" fill="#f70000" stroke="#000" stroke-width="1"/><rect x="248.50" y="610.68" width="11.00" height="45.82" fill="#f70000" stroke="#000"/><line x1="259.50" y1="656.50" x2="265.50" y2="650.50" stroke="#000" stroke-width="1"/><polygon points="281.50,656.50 287.00,651.00 287.00,603.44 281.50,608.94" fill="#f70000" stroke="#000" stroke-width="1"/><polygon points="270.50,608.94 276.00,603.44 287.00,603.44 281.50,608.94" fill="#f70000" stroke="#000" stroke-width="1"/><rect x="270.50" y="608.94" width="11.00" height="47.56" fill="#f70000" stroke="#000"/><polygon points="292.50,656.50 298.00,651.00 298.00,603.44 292.50,608.94" fill="#f70000" stroke="#000" stroke-width="1"/><polygon points="281.50,608.94 287.00,603.44 298.00,603.44 292.50,608.94" fill="#f70000" stroke="#000" stroke-width="1"/><rect x="281.50" y="608.94" width="11.00" height="47.56" fill="#f70000" stroke="#000"/><polygon points="304.50,656.50 310.00,651.00 310.00,600.83 304.50,606.33" fill="#f70000" stroke="#000" stroke-width="1"/><polygon points="292.50,606.33 298.00,600.83 310.00,600.83 304.50,606.33" fill="#f70000" stroke="#000" stroke-width="1"/><rect x="292.50" y="606.33" width="12.00" height="50.17" fill="#f70000" stroke="#000"/><polygon points="315.50,656.50 321.00,651.00 321.00,600.83 315.50,606.33" fill="#f70000" stroke="#000" stroke-width="1"/><polygon points="304.50,606.33 310.00,600.83 321.00,600.83 315.50,606.33" fill="#f70000" stroke="#000" stroke-width="1"/><rect x="304.50" y="606.33" width="11.00" height="50.17" fill="#f70000" stroke="#000"/><polygon points="326.50,656.50 332.00,651.00 332.00,611.27 326.50,616.77" fill="#f7f700" stroke="#000" stroke-width="1"/><polygon points="315.50,616.77 321.00,611.27 332.00,611.27 326.50,616.77" fill="#f7f700" stroke="#000" stroke-width="1"/><rect x="315.50" y="616.77" width="11.00" height="39.73" fill="#f7f700" stroke="#000"/><polygon points="337.50,656.50 343.00,651.00 343.00,600.83 337.50,606.33" fill="#f70000" stroke="#000" stroke-width="1"/><polygon points="326.50,606.33 332.00,600.83 343.00,600.83 337.50,606.33" fill="#f70000" stroke="#000" stroke-width="1"/><rect x="326.50" y="606.33" width="11.00" height="50.17" fill="#f70000" stroke="#000"/><polygon points="348.50,656.50 354.00,651.00 354.00,600.83 348.50,606.33" fill="#f70000" stroke="#000" stroke-width="1"/><polygon points="337.50,606.33 343.00,600.83 354.00,600.83 348.50,606.33" fill="#f70000" stroke="#000" stroke-width="1"/><rect x="337.50" y="606.33" width="11.00" height="50.17" fill="#f70000" stroke="#000"/><polygon points="359.50,656.50 365.00,651.00 365.00,613.30 359.50,618.80" fill="#f7f700" stroke="#000" stroke-width="1"/><polygon points="348.50,618.80 354.00,613.30 365.00,613.30 359.50,618.80" fill="#f7f700" stroke="#000" stroke-width="1"/><rect x="348.50" y="618.80" width="11.00" height="37.70" fill="#f7f700" stroke="#000"/><polygon points="370.50,656.50 376.00,651.00 376.00,603.44 370.50,608.94" fill="#f70000" stroke="#000" stroke-width="1"/><polygon points="359.50,608.94 365.00,603.44 376.00,603.44 370.50,608.94" fill="#f70000" stroke="#000" stroke-width="1"/><rect x="359.50" y="608.94" width="11.00" height="47.56" fill="#f70000" stroke="#000"/><polygon points="381.50,656.50 387.00,651.00 387.00,603.44 381.50,608.94" fill="#f70000" stroke="#000" stroke-width="1"/><polygon points="370.50,608.94 376.00,603.44 387.00,603.44 381.50,608.94" fill="#f70000" stroke="#000" stroke-width="1"/><rect x="370.50" y="608.94" width="11.00" height="47.56" fill="#f70000" stroke="#000"/><line x1="49.50" y1="656.50" x2="381.50" y2="656.50" stroke="#000" stroke-width="1"/><line x1="44.00" y1="656.50" x2="49.50" y2="656.50" stroke="#000" stroke-width="1"/><line x1="44.00" y1="650.70" x2="49.50" y2="650.70" stroke="#000" stroke-width="1"/><line x1="44.00" y1="644.90" x2="49.50" y2="644.90" stroke="#000" stroke-width="1"/><line x1="44.00" y1="639.10" x2="49.50" y2="639.10" stroke="#000" stroke-width="1"/><line x1="44.00" y1="633.30" x2="49.50" y2="633.30" stroke="#000" stroke-width="1"/><line x1="44.00" y1="627.50" x2="49.50" y2="627.50" stroke="#000" stroke-width="1"/><line x1="44.00" y1="621.70" x2="49.50" y2="621.70" stroke="#000" stroke-width="1"/><line x1="44.00" y1="615.90" x2="49.50" y2="615.90" stroke="#000" stroke-width="1"/><line x1="44.00" y1="610.10" x2="49.50" y2="610.10" stroke="#000" stroke-width="1"/><line x1="44.00" y1="604.30" x2="49.50" y2="604.30" stroke="#000" stroke-width="1"/><line x1="44.00" y1="598.50" x2="49.50" y2="598.50" stroke="#000" stroke-width="1"/><line x1="49.50" y1="598.50" x2="49.50" y2="656.50" stroke="#000" stroke-width="1"/><rect x="1" y="692" width="9" height="9" fill="#d3ccc9" stroke="none"/><rect x="1" y="692" width="9" height="1" fill="#fff" stroke="none"/><rect x="1" y="692" width="1" height="9" fill="#fff" stroke="none"/><rect x="9" y="693" width="1" height="8" fill="#5a9a5a" stroke="none"/><rect x="2" y="700" width="8" height="1" fill="#5a9a5a" stroke="none"/><rect x="10" y="692" width="1" height="9" fill="#283050" stroke="none"/><rect x="4" y="695" width="1" height="5" fill="#000" stroke="none"/><rect x="7" y="695.0" width="1" height="5" fill="#000" stroke="none"/><rect x="6" y="696.0" width="1" height="3" fill="#000" stroke="none"/><rect x="5" y="697.0" width="1" height="1" fill="#000" stroke="none"/><rect x="11" y="692" width="9" height="9" fill="#d3ccc9" stroke="none"/><rect x="11" y="692" width="9" height="1" fill="#fff" stroke="none"/><rect x="11" y="692" width="1" height="9" fill="#fff" stroke="none"/><rect x="19" y="693" width="1" height="8" fill="#5a9a5a" stroke="none"/><rect x="12" y="700" width="8" height="1" fill="#5a9a5a" stroke="none"/><rect x="20" y="692" width="1" height="9" fill="#283050" stroke="none"/><rect x="15" y="695.0" width="1" height="5" fill="#000" stroke="none"/><rect x="14" y="696.0" width="1" height="3" fill="#000" stroke="none"/><rect x="13" y="697.0" width="1" height="1" fill="#000" stroke="none"/><rect x="18" y="695.0" width="1" height="5" fill="#000" stroke="none"/><rect x="17" y="696.0" width="1" height="3" fill="#000" stroke="none"/><rect x="16" y="697.0" width="1" height="1" fill="#000" stroke="none"/><rect x="21" y="692" width="9" height="9" fill="#d3ccc9" stroke="none"/><rect x="21" y="692" width="9" height="1" fill="#fff" stroke="none"/><rect x="21" y="692" width="1" height="9" fill="#fff" stroke="none"/><rect x="29" y="693" width="1" height="8" fill="#5a9a5a" stroke="none"/><rect x="22" y="700" width="8" height="1" fill="#5a9a5a" stroke="none"/><rect x="30" y="692" width="1" height="9" fill="#283050" stroke="none"/><rect x="26" y="695.0" width="1" height="5" fill="#000" stroke="none"/><rect x="25" y="696.0" width="1" height="3" fill="#000" stroke="none"/><rect x="24" y="697.0" width="1" height="1" fill="#000" stroke="none"/><rect x="371" y="692" width="9" height="9" fill="#d3ccc9" stroke="none"/><rect x="371" y="692" width="9" height="1" fill="#fff" stroke="none"/><rect x="371" y="692" width="1" height="9" fill="#fff" stroke="none"/><rect x="379" y="693" width="1" height="8" fill="#5a9a5a" stroke="none"/><rect x="372" y="700" width="8" height="1" fill="#5a9a5a" stroke="none"/><rect x="380" y="692" width="1" height="9" fill="#283050" stroke="none"/><rect x="375" y="695.0" width="1" height="5" fill="#000" stroke="none"/><rect x="376" y="696.0" width="1" height="3" fill="#000" stroke="none"/><rect x="377" y="697.0" width="1" height="1" fill="#000" stroke="none"/><rect x="381" y="692" width="9" height="9" fill="#d3ccc9" stroke="none"/><rect x="381" y="692" width="9" height="1" fill="#fff" stroke="none"/><rect x="381" y="692" width="1" height="9" fill="#fff" stroke="none"/><rect x="389" y="693" width="1" height="8" fill="#5a9a5a" stroke="none"/><rect x="382" y="700" width="8" height="1" fill="#5a9a5a" stroke="none"/><rect x="390" y="692" width="1" height="9" fill="#283050" stroke="none"/><rect x="383" y="695.0" width="1" height="5" fill="#000" stroke="none"/><rect x="384" y="696.0" width="1" height="3" fill="#000" stroke="none"/><rect x="385" y="697.0" width="1" height="1" fill="#000" stroke="none"/><rect x="386" y="695.0" width="1" height="5" fill="#000" stroke="none"/><rect x="387" y="696.0" width="1" height="3" fill="#000" stroke="none"/><rect x="388" y="697.0" width="1" height="1" fill="#000" stroke="none"/><rect x="391" y="692" width="9" height="9" fill="#d3ccc9" stroke="none"/><rect x="391" y="692" width="9" height="1" fill="#fff" stroke="none"/><rect x="391" y="692" width="1" height="9" fill="#fff" stroke="none"/><rect x="399" y="693" width="1" height="8" fill="#5a9a5a" stroke="none"/><rect x="392" y="700" width="8" height="1" fill="#5a9a5a" stroke="none"/><rect x="400" y="692" width="1" height="9" fill="#283050" stroke="none"/><rect x="394" y="695.0" width="1" height="5" fill="#000" stroke="none"/><rect x="395" y="696.0" width="1" height="3" fill="#000" stroke="none"/><rect x="396" y="697.0" width="1" height="1" fill="#000" stroke="none"/><rect x="397" y="695" width="1" height="5" fill="#000" stroke="none"/><rect x="454.50" y="593.50" width="211.50" height="75.50" fill="#63995a" stroke="#000"/><polygon points="446.50,676.50 454.50,669.00 454.50,593.50 446.50,601.00" fill="#b4bac8" stroke="#000" stroke-width="1"/><polygon points="446.50,676.50 454.50,669.00 666.00,669.00 658.00,676.50" fill="#b4bac8" stroke="#000" stroke-width="1"/><polygon points="480.42,676.50 488.42,669.00 488.42,665.25 480.42,672.75" fill="#00f700" stroke="#000" stroke-width="1"/><polygon points="446.50,672.75 454.50,665.25 488.42,665.25 480.42,672.75" fill="#00f700" stroke="#000" stroke-width="1"/><rect x="446.50" y="672.75" width="33.92" height="3.75" fill="#00f700" stroke="#000"/><polygon points="515.83,676.50 523.83,669.00 523.83,658.50 515.83,666.00" fill="#00f700" stroke="#000" stroke-width="1"/><polygon points="482.72,666.00 490.72,658.50 523.83,658.50 515.83,666.00" fill="#00f700" stroke="#000" stroke-width="1"/><rect x="482.72" y="666.00" width="33.12" height="10.50" fill="#00f700" stroke="#000"/><polygon points="551.25,676.50 559.25,669.00 559.25,658.50 551.25,666.00" fill="#00f700" stroke="#000" stroke-width="1"/><polygon points="518.13,666.00 526.13,658.50 559.25,658.50 551.25,666.00" fill="#00f700" stroke="#000" stroke-width="1"/><rect x="518.13" y="666.00" width="33.12" height="10.50" fill="#00f700" stroke="#000"/><polygon points="586.67,676.50 594.67,669.00 594.67,658.88 586.67,666.38" fill="#00f700" stroke="#000" stroke-width="1"/><polygon points="553.55,666.38 561.55,658.88 594.67,658.88 586.67,666.38" fill="#00f700" stroke="#000" stroke-width="1"/><rect x="553.55" y="666.38" width="33.12" height="10.12" fill="#00f700" stroke="#000"/><polygon points="622.08,676.50 630.08,669.00 630.08,638.25 622.08,645.75" fill="#00f700" stroke="#000" stroke-width="1"/><polygon points="588.97,645.75 596.97,638.25 630.08,638.25 622.08,645.75" fill="#00f700" stroke="#000" stroke-width="1"/><rect x="588.97" y="645.75" width="33.12" height="30.75" fill="#00f700" stroke="#000"/><polygon points="657.50,676.50 665.50,669.00 665.50,660.38 657.50,667.88" fill="#00f700" stroke="#000" stroke-width="1"/><polygon points="624.38,667.88 632.38,660.38 665.50,660.38 657.50,667.88" fill="#00f700" stroke="#000" stroke-width="1"/><rect x="624.38" y="667.88" width="33.12" height="8.62" fill="#00f700" stroke="#000"/><line x1="446.50" y1="676.50" x2="659.00" y2="676.50" stroke="#000" stroke-width="1"/><line x1="441.00" y1="676.50" x2="446.50" y2="676.50" stroke="#000" stroke-width="1"/><line x1="441.00" y1="669.00" x2="446.50" y2="669.00" stroke="#000" stroke-width="1"/><line x1="441.00" y1="661.50" x2="446.50" y2="661.50" stroke="#000" stroke-width="1"/><line x1="441.00" y1="654.00" x2="446.50" y2="654.00" stroke="#000" stroke-width="1"/><line x1="441.00" y1="646.50" x2="446.50" y2="646.50" stroke="#000" stroke-width="1"/><line x1="441.00" y1="639.00" x2="446.50" y2="639.00" stroke="#000" stroke-width="1"/><line x1="441.00" y1="631.50" x2="446.50" y2="631.50" stroke="#000" stroke-width="1"/><line x1="441.00" y1="624.00" x2="446.50" y2="624.00" stroke="#000" stroke-width="1"/><line x1="441.00" y1="616.50" x2="446.50" y2="616.50" stroke="#000" stroke-width="1"/><line x1="441.00" y1="609.00" x2="446.50" y2="609.00" stroke="#000" stroke-width="1"/><line x1="441.00" y1="601.50" x2="446.50" y2="601.50" stroke="#000" stroke-width="1"/><line x1="446.50" y1="601.50" x2="446.50" y2="676.50" stroke="#000" stroke-width="1"/><rect x="733.50" y="594.50" width="274.00" height="78.00" fill="#63995a" stroke="#000"/><polygon points="729.50,676.50 733.50,672.50 733.50,594.50 729.50,598.50" fill="#b4bac8" stroke="#000" stroke-width="1"/><polygon points="729.50,676.50 733.50,672.50 1007.50,672.50 1003.50,676.50" fill="#b4bac8" stroke="#000" stroke-width="1"/><polygon points="740.50,676.50 744.50,672.50 744.50,608.49 740.50,612.49" fill="#f70000" stroke="#000" stroke-width="1"/><polygon points="729.50,612.49 733.50,608.49 744.50,608.49 740.50,612.49" fill="#f70000" stroke="#000" stroke-width="1"/><rect x="729.50" y="612.49" width="11.00" height="64.02" fill="#f70000" stroke="#000"/><polygon points="752.50,676.50 756.50,672.50 756.50,608.49 752.50,612.49" fill="#f70000" stroke="#000" stroke-width="1"/><polygon points="740.50,612.49 744.50,608.49 756.50,608.49 752.50,612.49" fill="#f70000" stroke="#000" stroke-width="1"/><rect x="740.50" y="612.49" width="12.00" height="64.02" fill="#f70000" stroke="#000"/><polygon points="763.50,676.50 767.50,672.50 767.50,608.49 763.50,612.49" fill="#f70000" stroke="#000" stroke-width="1"/><polygon points="752.50,612.49 756.50,608.49 767.50,608.49 763.50,612.49" fill="#f70000" stroke="#000" stroke-width="1"/><rect x="752.50" y="612.49" width="11.00" height="64.02" fill="#f70000" stroke="#000"/><polygon points="775.50,676.50 779.50,672.50 779.50,608.49 775.50,612.49" fill="#f70000" stroke="#000" stroke-width="1"/><polygon points="763.50,612.49 767.50,608.49 779.50,608.49 775.50,612.49" fill="#f70000" stroke="#000" stroke-width="1"/><rect x="763.50" y="612.49" width="12.00" height="64.02" fill="#f70000" stroke="#000"/><polygon points="786.50,676.50 790.50,672.50 790.50,608.49 786.50,612.49" fill="#f70000" stroke="#000" stroke-width="1"/><polygon points="775.50,612.49 779.50,608.49 790.50,608.49 786.50,612.49" fill="#f70000" stroke="#000" stroke-width="1"/><rect x="775.50" y="612.49" width="11.00" height="64.02" fill="#f70000" stroke="#000"/><polygon points="798.50,676.50 802.50,672.50 802.50,608.49 798.50,612.49" fill="#f70000" stroke="#000" stroke-width="1"/><polygon points="786.50,612.49 790.50,608.49 802.50,608.49 798.50,612.49" fill="#f70000" stroke="#000" stroke-width="1"/><rect x="786.50" y="612.49" width="12.00" height="64.02" fill="#f70000" stroke="#000"/><polygon points="809.50,676.50 813.50,672.50 813.50,607.01 809.50,611.01" fill="#f70000" stroke="#000" stroke-width="1"/><polygon points="798.50,611.01 802.50,607.01 813.50,607.01 809.50,611.01" fill="#f70000" stroke="#000" stroke-width="1"/><rect x="798.50" y="611.01" width="11.00" height="65.49" fill="#f70000" stroke="#000"/><polygon points="820.50,676.50 824.50,672.50 824.50,607.01 820.50,611.01" fill="#f70000" stroke="#000" stroke-width="1"/><polygon points="809.50,611.01 813.50,607.01 824.50,607.01 820.50,611.01" fill="#f70000" stroke="#000" stroke-width="1"/><rect x="809.50" y="611.01" width="11.00" height="65.49" fill="#f70000" stroke="#000"/><polygon points="832.50,676.50 836.50,672.50 836.50,607.01 832.50,611.01" fill="#f70000" stroke="#000" stroke-width="1"/><polygon points="820.50,611.01 824.50,607.01 836.50,607.01 832.50,611.01" fill="#f70000" stroke="#000" stroke-width="1"/><rect x="820.50" y="611.01" width="12.00" height="65.49" fill="#f70000" stroke="#000"/><polygon points="843.50,676.50 847.50,672.50 847.50,607.01 843.50,611.01" fill="#f70000" stroke="#000" stroke-width="1"/><polygon points="832.50,611.01 836.50,607.01 847.50,607.01 843.50,611.01" fill="#f70000" stroke="#000" stroke-width="1"/><rect x="832.50" y="611.01" width="11.00" height="65.49" fill="#f70000" stroke="#000"/><polygon points="855.50,676.50 859.50,672.50 859.50,607.01 855.50,611.01" fill="#f70000" stroke="#000" stroke-width="1"/><polygon points="843.50,611.01 847.50,607.01 859.50,607.01 855.50,611.01" fill="#f70000" stroke="#000" stroke-width="1"/><rect x="843.50" y="611.01" width="12.00" height="65.49" fill="#f70000" stroke="#000"/><polygon points="866.50,676.50 870.50,672.50 870.50,605.46 866.50,609.46" fill="#f70000" stroke="#000" stroke-width="1"/><polygon points="855.50,609.46 859.50,605.46 870.50,605.46 866.50,609.46" fill="#f70000" stroke="#000" stroke-width="1"/><rect x="855.50" y="609.46" width="11.00" height="67.04" fill="#f70000" stroke="#000"/><polygon points="877.50,676.50 881.50,672.50 881.50,605.46 877.50,609.46" fill="#f70000" stroke="#000" stroke-width="1"/><polygon points="866.50,609.46 870.50,605.46 881.50,605.46 877.50,609.46" fill="#f70000" stroke="#000" stroke-width="1"/><rect x="866.50" y="609.46" width="11.00" height="67.04" fill="#f70000" stroke="#000"/><line x1="877.50" y1="676.50" x2="881.50" y2="672.50" stroke="#000" stroke-width="1"/><line x1="889.50" y1="676.50" x2="893.50" y2="672.50" stroke="#000" stroke-width="1"/><line x1="900.50" y1="676.50" x2="904.50" y2="672.50" stroke="#000" stroke-width="1"/><line x1="912.50" y1="676.50" x2="916.50" y2="672.50" stroke="#000" stroke-width="1"/><line x1="923.50" y1="676.50" x2="927.50" y2="672.50" stroke="#000" stroke-width="1"/><line x1="935.50" y1="676.50" x2="939.50" y2="672.50" stroke="#000" stroke-width="1"/><line x1="946.50" y1="676.50" x2="950.50" y2="672.50" stroke="#000" stroke-width="1"/><line x1="957.50" y1="676.50" x2="961.50" y2="672.50" stroke="#000" stroke-width="1"/><line x1="969.50" y1="676.50" x2="973.50" y2="672.50" stroke="#000" stroke-width="1"/><line x1="980.50" y1="676.50" x2="984.50" y2="672.50" stroke="#000" stroke-width="1"/><line x1="992.50" y1="676.50" x2="996.50" y2="672.50" stroke="#000" stroke-width="1"/><line x1="729.50" y1="676.50" x2="1003.50" y2="676.50" stroke="#000" stroke-width="1"/><line x1="724.00" y1="676.50" x2="729.50" y2="676.50" stroke="#000" stroke-width="1"/><line x1="724.00" y1="668.75" x2="729.50" y2="668.75" stroke="#000" stroke-width="1"/><line x1="724.00" y1="661.00" x2="729.50" y2="661.00" stroke="#000" stroke-width="1"/><line x1="724.00" y1="653.25" x2="729.50" y2="653.25" stroke="#000" stroke-width="1"/><line x1="724.00" y1="645.50" x2="729.50" y2="645.50" stroke="#000" stroke-width="1"/><line x1="724.00" y1="637.75" x2="729.50" y2="637.75" stroke="#000" stroke-width="1"/><line x1="724.00" y1="630.00" x2="729.50" y2="630.00" stroke="#000" stroke-width="1"/><line x1="724.00" y1="622.25" x2="729.50" y2="622.25" stroke="#000" stroke-width="1"/><line x1="724.00" y1="614.50" x2="729.50" y2="614.50" stroke="#000" stroke-width="1"/><line x1="724.00" y1="606.75" x2="729.50" y2="606.75" stroke="#000" stroke-width="1"/><line x1="724.00" y1="599.00" x2="729.50" y2="599.00" stroke="#000" stroke-width="1"/><line x1="729.50" y1="599.00" x2="729.50" y2="676.50" stroke="#000" stroke-width="1"/><rect x="681" y="692" width="9" height="9" fill="#d3ccc9" stroke="none"/><rect x="681" y="692" width="9" height="1" fill="#fff" stroke="none"/><rect x="681" y="692" width="1" height="9" fill="#fff" stroke="none"/><rect x="689" y="693" width="1" height="8" fill="#5a9a5a" stroke="none"/><rect x="682" y="700" width="8" height="1" fill="#5a9a5a" stroke="none"/><rect x="690" y="692" width="1" height="9" fill="#283050" stroke="none"/><rect x="684" y="695" width="1" height="5" fill="#000" stroke="none"/><rect x="687" y="695.0" width="1" height="5" fill="#000" stroke="none"/><rect x="686" y="696.0" width="1" height="3" fill="#000" stroke="none"/><rect x="685" y="697.0" width="1" height="1" fill="#000" stroke="none"/><rect x="691" y="692" width="9" height="9" fill="#d3ccc9" stroke="none"/><rect x="691" y="692" width="9" height="1" fill="#fff" stroke="none"/><rect x="691" y="692" width="1" height="9" fill="#fff" stroke="none"/><rect x="699" y="693" width="1" height="8" fill="#5a9a5a" stroke="none"/><rect x="692" y="700" width="8" height="1" fill="#5a9a5a" stroke="none"/><rect x="700" y="692" width="1" height="9" fill="#283050" stroke="none"/><rect x="695" y="695.0" width="1" height="5" fill="#000" stroke="none"/><rect x="694" y="696.0" width="1" height="3" fill="#000" stroke="none"/><rect x="693" y="697.0" width="1" height="1" fill="#000" stroke="none"/><rect x="698" y="695.0" width="1" height="5" fill="#000" stroke="none"/><rect x="697" y="696.0" width="1" height="3" fill="#000" stroke="none"/><rect x="696" y="697.0" width="1" height="1" fill="#000" stroke="none"/><rect x="701" y="692" width="9" height="9" fill="#d3ccc9" stroke="none"/><rect x="701" y="692" width="9" height="1" fill="#fff" stroke="none"/><rect x="701" y="692" width="1" height="9" fill="#fff" stroke="none"/><rect x="709" y="693" width="1" height="8" fill="#5a9a5a" stroke="none"/><rect x="702" y="700" width="8" height="1" fill="#5a9a5a" stroke="none"/><rect x="710" y="692" width="1" height="9" fill="#283050" stroke="none"/><rect x="706" y="695.0" width="1" height="5" fill="#000" stroke="none"/><rect x="705" y="696.0" width="1" height="3" fill="#000" stroke="none"/><rect x="704" y="697.0" width="1" height="1" fill="#000" stroke="none"/><rect x="991" y="692" width="9" height="9" fill="#d3ccc9" stroke="none"/><rect x="991" y="692" width="9" height="1" fill="#fff" stroke="none"/><rect x="991" y="692" width="1" height="9" fill="#fff" stroke="none"/><rect x="999" y="693" width="1" height="8" fill="#5a9a5a" stroke="none"/><rect x="992" y="700" width="8" height="1" fill="#5a9a5a" stroke="none"/><rect x="1000" y="692" width="1" height="9" fill="#283050" stroke="none"/><rect x="995" y="695.0" width="1" height="5" fill="#000" stroke="none"/><rect x="996" y="696.0" width="1" height="3" fill="#000" stroke="none"/><rect x="997" y="697.0" width="1" height="1" fill="#000" stroke="none"/><rect x="1001" y="692" width="9" height="9" fill="#d3ccc9" stroke="none"/><rect x="1001" y="692" width="9" height="1" fill="#fff" stroke="none"/><rect x="1001" y="692" width="1" height="9" fill="#fff" stroke="none"/><rect x="1009" y="693" width="1" height="8" fill="#5a9a5a" stroke="none"/><rect x="1002" y="700" width="8" height="1" fill="#5a9a5a" stroke="none"/><rect x="1010" y="692" width="1" height="9" fill="#283050" stroke="none"/><rect x="1003" y="695.0" width="1" height="5" fill="#000" stroke="none"/><rect x="1004" y="696.0" width="1" height="3" fill="#000" stroke="none"/><rect x="1005" y="697.0" width="1" height="1" fill="#000" stroke="none"/><rect x="1006" y="695.0" width="1" height="5" fill="#000" stroke="none"/><rect x="1007" y="696.0" width="1" height="3" fill="#000" stroke="none"/><rect x="1008" y="697.0" width="1" height="1" fill="#000" stroke="none"/><rect x="1011" y="692" width="9" height="9" fill="#d3ccc9" stroke="none"/><rect x="1011" y="692" width="9" height="1" fill="#fff" stroke="none"/><rect x="1011" y="692" width="1" height="9" fill="#fff" stroke="none"/><rect x="1019" y="693" width="1" height="8" fill="#5a9a5a" stroke="none"/><rect x="1012" y="700" width="8" height="1" fill="#5a9a5a" stroke="none"/><rect x="1020" y="692" width="1" height="9" fill="#283050" stroke="none"/><rect x="1014" y="695.0" width="1" height="5" fill="#000" stroke="none"/><rect x="1015" y="696.0" width="1" height="3" fill="#000" stroke="none"/><rect x="1016" y="697.0" width="1" height="1" fill="#000" stroke="none"/><rect x="1017" y="695" width="1" height="5" fill="#000" stroke="none"/></svg>
<div class="t" style="left:36.50px;top:225.50px;font-size:13px;line-height:15px;color:#000;">User Pools DB+NDB Faulting</div>
<div class="t" style="left:25.49px;top:237.10px;font-size:11px;line-height:13px;color:#000;transform:scaleX(0.9450);">100.0</div>
<div class="t" style="left:31.27px;top:275.70px;font-size:11px;line-height:13px;color:#000;transform:scaleX(0.9450);">50.0</div>
<div class="t" style="left:31.27px;top:314.30px;font-size:11px;line-height:13px;color:#000;transform:scaleX(0.9450);">0.00</div>
<div class="t" style="left:85.40px;top:316.5px;font-size:13px;line-height:13px;font-weight:bold;font-style:italic;transform-origin:0 0;transform:rotate(-90deg) translate(0,-11.77px) scaleX(1.03);">BASE</div>
<div class="t" style="left:123.53px;top:316.5px;font-size:13px;line-height:13px;font-weight:bold;font-style:italic;transform-origin:0 0;transform:rotate(-90deg) translate(0,-11.77px) scaleX(1.03);">SPOOL</div>
<div class="t" style="left:161.65px;top:316.5px;font-size:13px;line-height:13px;font-weight:bold;font-style:italic;transform-origin:0 0;transform:rotate(-90deg) translate(0,-11.77px) scaleX(1.03);">INTERACT</div>
<div class="t" style="left:325.00px;top:225.50px;font-size:11px;line-height:13px;color:#000;transform:scaleX(0.9938);">24 Hour Active Jobs 04/11/24</div>
<div class="t" style="left:242.60px;top:237.30px;font-size:11px;line-height:13px;color:#000;transform:scaleX(0.9450);">10000</div>
<div class="t" style="left:248.38px;top:270.30px;font-size:11px;line-height:13px;color:#000;transform:scaleX(0.9450);">5000</div>
<div class="t" style="left:265.72px;top:303.30px;font-size:11px;line-height:13px;color:#000;transform:scaleX(0.9450);">0</div>
<div class="t" style="left:280.50px;top:310.50px;font-size:11px;line-height:13px;color:#000;transform:scaleX(0.9450);">0</div>
<div class="t" style="left:341.62px;top:310.50px;font-size:11px;line-height:13px;color:#000;transform:scaleX(0.9450);">6</div>
<div class="t" style="left:402.75px;top:310.50px;font-size:11px;line-height:13px;color:#000;transform:scaleX(0.9450);">12</div>
<div class="t" style="left:463.88px;top:310.50px;font-size:11px;line-height:13px;color:#000;transform:scaleX(0.9450);">18</div>
<div class="t" style="left:514.81px;top:310.50px;font-size:11px;line-height:13px;color:#000;transform:scaleX(0.9450);">23</div>
<div class="t" style="left:696.50px;top:335.50px;font-size:13px;line-height:15px;color:#000;">24 Hour CPU on Wed 04/11/24</div>
<div class="t" style="left:567.49px;top:347.30px;font-size:11px;line-height:13px;color:#000;transform:scaleX(0.9450);">100.0</div>
<div class="t" style="left:573.27px;top:380.30px;font-size:11px;line-height:13px;color:#000;transform:scaleX(0.9450);">50.0</div>
<div class="t" style="left:573.27px;top:413.30px;font-size:11px;line-height:13px;color:#000;transform:scaleX(0.9450);">0.00</div>
<div class="t" style="left:602.50px;top:420.50px;font-size:11px;line-height:13px;color:#000;transform:scaleX(0.9450);">0</div>
<div class="t" style="left:697.72px;top:420.50px;font-size:11px;line-height:13px;color:#000;transform:scaleX(0.9450);">6</div>
<div class="t" style="left:792.94px;top:420.50px;font-size:11px;line-height:13px;color:#000;transform:scaleX(0.9450);">12</div>
<div class="t" style="left:888.16px;top:420.50px;font-size:11px;line-height:13px;color:#000;transform:scaleX(0.9450);">18</div>
<div class="t" style="left:967.51px;top:420.50px;font-size:11px;line-height:13px;color:#000;transform:scaleX(0.9450);">23</div>
<div class="t" style="left:672.00px;top:446.00px;font-size:13px;line-height:15px;color:#000;transform:scaleX(0.9942);">Last 30 CPU Samples on Wed 04/11/24</div>
<div class="t" style="left:567.49px;top:461.30px;font-size:11px;line-height:13px;color:#000;transform:scaleX(0.9450);">100.0</div>
<div class="t" style="left:573.27px;top:493.80px;font-size:11px;line-height:13px;color:#000;transform:scaleX(0.9450);">50.0</div>
<div class="t" style="left:573.27px;top:526.30px;font-size:11px;line-height:13px;color:#000;transform:scaleX(0.9450);">0.00</div>
<div class="t" style="left:606.00px;top:535px;font-size:11px;line-height:11px;transform-origin:0 0;transform:rotate(90deg) translate(0,-9.96px) scaleX(0.945);">11:38</div>
<div class="t" style="left:619.33px;top:535px;font-size:11px;line-height:11px;transform-origin:0 0;transform:rotate(90deg) translate(0,-9.96px) scaleX(0.945);">11:40</div>
<div class="t" style="left:632.67px;top:535px;font-size:11px;line-height:11px;transform-origin:0 0;transform:rotate(90deg) translate(0,-9.96px) scaleX(0.945);">11:42</div>
<div class="t" style="left:646.00px;top:535px;font-size:11px;line-height:11px;transform-origin:0 0;transform:rotate(90deg) translate(0,-9.96px) scaleX(0.945);">11:44</div>
<div class="t" style="left:659.33px;top:535px;font-size:11px;line-height:11px;transform-origin:0 0;transform:rotate(90deg) translate(0,-9.96px) scaleX(0.945);">11:46</div>
<div class="t" style="left:672.67px;top:535px;font-size:11px;line-height:11px;transform-origin:0 0;transform:rotate(90deg) translate(0,-9.96px) scaleX(0.945);">11:48</div>
<div class="t" style="left:686.00px;top:535px;font-size:11px;line-height:11px;transform-origin:0 0;transform:rotate(90deg) translate(0,-9.96px) scaleX(0.945);">11:50</div>
<div class="t" style="left:699.33px;top:535px;font-size:11px;line-height:11px;transform-origin:0 0;transform:rotate(90deg) translate(0,-9.96px) scaleX(0.945);">11:52</div>
<div class="t" style="left:712.67px;top:535px;font-size:11px;line-height:11px;transform-origin:0 0;transform:rotate(90deg) translate(0,-9.96px) scaleX(0.945);">11:54</div>
<div class="t" style="left:726.00px;top:535px;font-size:11px;line-height:11px;transform-origin:0 0;transform:rotate(90deg) translate(0,-9.96px) scaleX(0.945);">11:56</div>
<div class="t" style="left:739.33px;top:535px;font-size:11px;line-height:11px;transform-origin:0 0;transform:rotate(90deg) translate(0,-9.96px) scaleX(0.945);">11:58</div>
<div class="t" style="left:752.67px;top:535px;font-size:11px;line-height:11px;transform-origin:0 0;transform:rotate(90deg) translate(0,-9.96px) scaleX(0.945);">12:00</div>
<div class="t" style="left:766.00px;top:535px;font-size:11px;line-height:11px;transform-origin:0 0;transform:rotate(90deg) translate(0,-9.96px) scaleX(0.945);">12:02</div>
<div class="t" style="left:779.33px;top:535px;font-size:11px;line-height:11px;transform-origin:0 0;transform:rotate(90deg) translate(0,-9.96px) scaleX(0.945);">12:04</div>
<div class="t" style="left:792.67px;top:535px;font-size:11px;line-height:11px;transform-origin:0 0;transform:rotate(90deg) translate(0,-9.96px) scaleX(0.945);">12:06</div>
<div class="t" style="left:806.00px;top:535px;font-size:11px;line-height:11px;transform-origin:0 0;transform:rotate(90deg) translate(0,-9.96px) scaleX(0.945);">12:08</div>
<div class="t" style="left:819.33px;top:535px;font-size:11px;line-height:11px;transform-origin:0 0;transform:rotate(90deg) translate(0,-9.96px) scaleX(0.945);">12:10</div>
<div class="t" style="left:832.67px;top:535px;font-size:11px;line-height:11px;transform-origin:0 0;transform:rotate(90deg) translate(0,-9.96px) scaleX(0.945);">12:12</div>
<div class="t" style="left:846.00px;top:535px;font-size:11px;line-height:11px;transform-origin:0 0;transform:rotate(90deg) translate(0,-9.96px) scaleX(0.945);">12:14</div>
<div class="t" style="left:859.33px;top:535px;font-size:11px;line-height:11px;transform-origin:0 0;transform:rotate(90deg) translate(0,-9.96px) scaleX(0.945);">12:16</div>
<div class="t" style="left:872.67px;top:535px;font-size:11px;line-height:11px;transform-origin:0 0;transform:rotate(90deg) translate(0,-9.96px) scaleX(0.945);">12:18</div>
<div class="t" style="left:886.00px;top:535px;font-size:11px;line-height:11px;transform-origin:0 0;transform:rotate(90deg) translate(0,-9.96px) scaleX(0.945);">12:20</div>
<div class="t" style="left:899.33px;top:535px;font-size:11px;line-height:11px;transform-origin:0 0;transform:rotate(90deg) translate(0,-9.96px) scaleX(0.945);">12:22</div>
<div class="t" style="left:912.67px;top:535px;font-size:11px;line-height:11px;transform-origin:0 0;transform:rotate(90deg) translate(0,-9.96px) scaleX(0.945);">12:24</div>
<div class="t" style="left:926.00px;top:535px;font-size:11px;line-height:11px;transform-origin:0 0;transform:rotate(90deg) translate(0,-9.96px) scaleX(0.945);">12:26</div>
<div class="t" style="left:939.33px;top:535px;font-size:11px;line-height:11px;transform-origin:0 0;transform:rotate(90deg) translate(0,-9.96px) scaleX(0.945);">12:28</div>
<div class="t" style="left:952.67px;top:535px;font-size:11px;line-height:11px;transform-origin:0 0;transform:rotate(90deg) translate(0,-9.96px) scaleX(0.945);">12:30</div>
<div class="t" style="left:966.00px;top:535px;font-size:11px;line-height:11px;transform-origin:0 0;transform:rotate(90deg) translate(0,-9.96px) scaleX(0.945);">12:32</div>
<div class="t" style="left:979.33px;top:535px;font-size:11px;line-height:11px;transform-origin:0 0;transform:rotate(90deg) translate(0,-9.96px) scaleX(0.945);">12:34</div>
<div class="t" style="left:992.67px;top:535px;font-size:11px;line-height:11px;transform-origin:0 0;transform:rotate(90deg) translate(0,-9.96px) scaleX(0.945);">12:36</div>
<div class="t" style="left:117.00px;top:576.00px;font-size:11px;line-height:13px;color:#000;transform:scaleX(0.9814);">30 Days Percent Used Disk Trends</div>
<div class="t" style="left:13.49px;top:591.30px;font-size:11px;line-height:13px;color:#000;transform:scaleX(0.9450);">100.0</div>
<div class="t" style="left:19.27px;top:620.30px;font-size:11px;line-height:13px;color:#000;transform:scaleX(0.9450);">50.0</div>
<div class="t" style="left:19.27px;top:649.30px;font-size:11px;line-height:13px;color:#000;transform:scaleX(0.9450);">0.00</div>
<div class="t" style="left:49.70px;top:658px;font-size:11px;line-height:11px;transform-origin:0 0;transform:rotate(90deg) translate(0,-9.96px) scaleX(0.945);">10/24</div>
<div class="t" style="left:60.77px;top:658px;font-size:11px;line-height:11px;transform-origin:0 0;transform:rotate(90deg) translate(0,-9.96px) scaleX(0.945);">10/25</div>
<div class="t" style="left:71.83px;top:658px;font-size:11px;line-height:11px;transform-origin:0 0;transform:rotate(90deg) translate(0,-9.96px) scaleX(0.945);">10/26</div>
<div class="t" style="left:82.90px;top:658px;font-size:11px;line-height:11px;transform-origin:0 0;transform:rotate(90deg) translate(0,-9.96px) scaleX(0.945);">10/27</div>
<div class="t" style="left:93.97px;top:658px;font-size:11px;line-height:11px;transform-origin:0 0;transform:rotate(90deg) translate(0,-9.96px) scaleX(0.945);">10/28</div>
<div class="t" style="left:105.03px;top:658px;font-size:11px;line-height:11px;transform-origin:0 0;transform:rotate(90deg) translate(0,-9.96px) scaleX(0.945);">10/29</div>
<div class="t" style="left:116.10px;top:658px;font-size:11px;line-height:11px;transform-origin:0 0;transform:rotate(90deg) translate(0,-9.96px) scaleX(0.945);">10/30</div>
<div class="t" style="left:127.17px;top:658px;font-size:11px;line-height:11px;transform-origin:0 0;transform:rotate(90deg) translate(0,-9.96px) scaleX(0.945);">10/31</div>
<div class="t" style="left:138.23px;top:658px;font-size:11px;line-height:11px;transform-origin:0 0;transform:rotate(90deg) translate(0,-9.96px) scaleX(0.945);">11/01</div>
<div class="t" style="left:149.30px;top:658px;font-size:11px;line-height:11px;transform-origin:0 0;transform:rotate(90deg) translate(0,-9.96px) scaleX(0.945);">11/02</div>
<div class="t" style="left:160.37px;top:658px;font-size:11px;line-height:11px;transform-origin:0 0;transform:rotate(90deg) translate(0,-9.96px) scaleX(0.945);">11/03</div>
<div class="t" style="left:171.43px;top:658px;font-size:11px;line-height:11px;transform-origin:0 0;transform:rotate(90deg) translate(0,-9.96px) scaleX(0.945);">11/05</div>
<div class="t" style="left:182.50px;top:658px;font-size:11px;line-height:11px;transform-origin:0 0;transform:rotate(90deg) translate(0,-9.96px) scaleX(0.945);">11/06</div>
<div class="t" style="left:193.57px;top:658px;font-size:11px;line-height:11px;transform-origin:0 0;transform:rotate(90deg) translate(0,-9.96px) scaleX(0.945);">11/07</div>
<div class="t" style="left:204.63px;top:658px;font-size:11px;line-height:11px;transform-origin:0 0;transform:rotate(90deg) translate(0,-9.96px) scaleX(0.945);">11/08</div>
<div class="t" style="left:215.70px;top:658px;font-size:11px;line-height:11px;transform-origin:0 0;transform:rotate(90deg) translate(0,-9.96px) scaleX(0.945);">11/09</div>
<div class="t" style="left:226.77px;top:658px;font-size:11px;line-height:11px;transform-origin:0 0;transform:rotate(90deg) translate(0,-9.96px) scaleX(0.945);">11/11</div>
<div class="t" style="left:237.83px;top:658px;font-size:11px;line-height:11px;transform-origin:0 0;transform:rotate(90deg) translate(0,-9.96px) scaleX(0.945);">11/12</div>
<div class="t" style="left:248.90px;top:658px;font-size:11px;line-height:11px;transform-origin:0 0;transform:rotate(90deg) translate(0,-9.96px) scaleX(0.945);">11/13</div>
<div class="t" style="left:259.97px;top:658px;font-size:11px;line-height:11px;transform-origin:0 0;transform:rotate(90deg) translate(0,-9.96px) scaleX(0.945);">11/14</div>
<div class="t" style="left:271.03px;top:658px;font-size:11px;line-height:11px;transform-origin:0 0;transform:rotate(90deg) translate(0,-9.96px) scaleX(0.945);">11/15</div>
<div class="t" style="left:282.10px;top:658px;font-size:11px;line-height:11px;transform-origin:0 0;transform:rotate(90deg) translate(0,-9.96px) scaleX(0.945);">11/16</div>
<div class="t" style="left:293.17px;top:658px;font-size:11px;line-height:11px;transform-origin:0 0;transform:rotate(90deg) translate(0,-9.96px) scaleX(0.945);">11/17</div>
<div class="t" style="left:304.23px;top:658px;font-size:11px;line-height:11px;transform-origin:0 0;transform:rotate(90deg) translate(0,-9.96px) scaleX(0.945);">11/18</div>
<div class="t" style="left:315.30px;top:658px;font-size:11px;line-height:11px;transform-origin:0 0;transform:rotate(90deg) translate(0,-9.96px) scaleX(0.945);">11/19</div>
<div class="t" style="left:326.37px;top:658px;font-size:11px;line-height:11px;transform-origin:0 0;transform:rotate(90deg) translate(0,-9.96px) scaleX(0.945);">11/20</div>
<div class="t" style="left:337.43px;top:658px;font-size:11px;line-height:11px;transform-origin:0 0;transform:rotate(90deg) translate(0,-9.96px) scaleX(0.945);">11/21</div>
<div class="t" style="left:348.50px;top:658px;font-size:11px;line-height:11px;transform-origin:0 0;transform:rotate(90deg) translate(0,-9.96px) scaleX(0.945);">11/22</div>
<div class="t" style="left:359.57px;top:658px;font-size:11px;line-height:11px;transform-origin:0 0;transform:rotate(90deg) translate(0,-9.96px) scaleX(0.945);">11/23</div>
<div class="t" style="left:370.63px;top:658px;font-size:11px;line-height:11px;transform-origin:0 0;transform:rotate(90deg) translate(0,-9.96px) scaleX(0.945);">11/24</div>
<div class="t" style="left:472.50px;top:576.00px;font-size:11px;line-height:13px;color:#000;transform:scaleX(0.9659);">Daily Disk Seek Percentages</div>
<div class="t" style="left:410.49px;top:594.30px;font-size:11px;line-height:13px;color:#000;transform:scaleX(0.9450);">100.0</div>
<div class="t" style="left:416.27px;top:631.80px;font-size:11px;line-height:13px;color:#000;transform:scaleX(0.9450);">50.0</div>
<div class="t" style="left:416.27px;top:669.30px;font-size:11px;line-height:13px;color:#000;transform:scaleX(0.9450);">0.00</div>
<div class="t" style="left:446.00px;top:676.80px;font-size:11px;line-height:13px;color:#000;transform:scaleX(0.9450);">2/3</div>
<div class="t" style="left:481.42px;top:676.80px;font-size:11px;line-height:13px;color:#000;transform:scaleX(0.9450);">1/3</div>
<div class="t" style="left:516.83px;top:676.80px;font-size:11px;line-height:13px;color:#000;transform:scaleX(0.9450);">1/6</div>
<div class="t" style="left:552.25px;top:676.80px;font-size:11px;line-height:13px;color:#000;transform:scaleX(0.9450);">G1/12</div>
<div class="t" style="left:587.67px;top:676.80px;font-size:11px;line-height:13px;color:#000;transform:scaleX(0.9450);">L1/12</div>
<div class="t" style="left:623.08px;top:676.80px;font-size:11px;line-height:13px;color:#000;transform:scaleX(0.9450);">Zero</div>
<div class="t" style="left:763.00px;top:576.00px;font-size:11px;line-height:13px;color:#000;transform:scaleX(0.9757);">24 Hour Percent Disk Used 04/11/24</div>
<div class="t" style="left:693.49px;top:591.80px;font-size:11px;line-height:13px;color:#000;transform:scaleX(0.9450);">100.0</div>
<div class="t" style="left:699.27px;top:630.55px;font-size:11px;line-height:13px;color:#000;transform:scaleX(0.9450);">50.0</div>
<div class="t" style="left:699.27px;top:669.30px;font-size:11px;line-height:13px;color:#000;transform:scaleX(0.9450);">0.00</div>
<div class="t" style="left:728.00px;top:676.80px;font-size:11px;line-height:13px;color:#000;transform:scaleX(0.9450);">0</div>
<div class="t" style="left:796.50px;top:676.80px;font-size:11px;line-height:13px;color:#000;transform:scaleX(0.9450);">6</div>
<div class="t" style="left:865.00px;top:676.80px;font-size:11px;line-height:13px;color:#000;transform:scaleX(0.9450);">12</div>
<div class="t" style="left:933.50px;top:676.80px;font-size:11px;line-height:13px;color:#000;transform:scaleX(0.9450);">18</div>
<div class="t" style="left:990.58px;top:676.80px;font-size:11px;line-height:13px;color:#000;transform:scaleX(0.9450);">23</div>
</body></html>
